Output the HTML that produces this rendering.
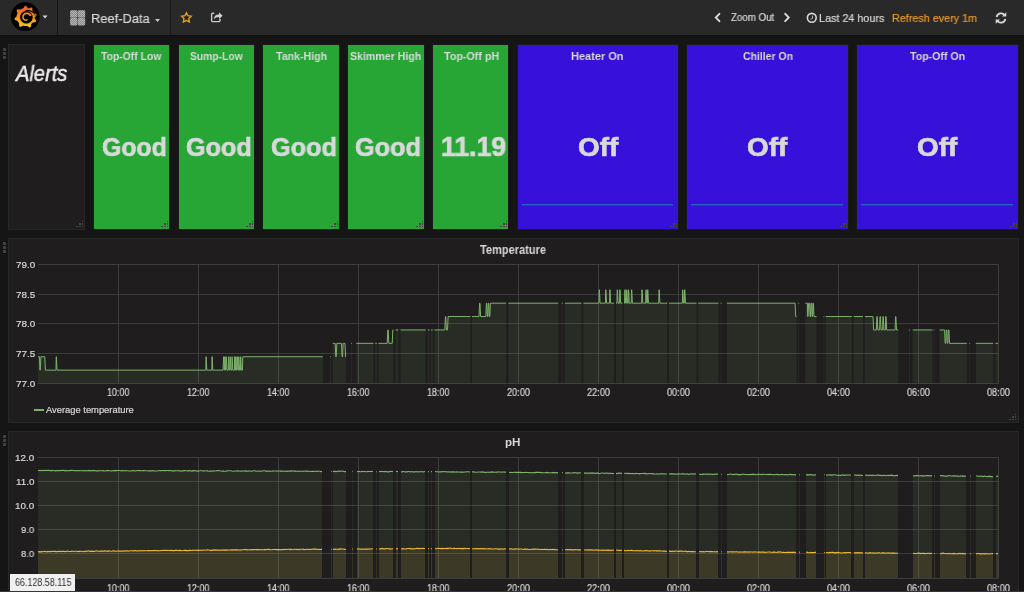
<!DOCTYPE html><html><head><meta charset="utf-8"><style>
html,body{margin:0;padding:0}
body{width:1024px;height:592px;overflow:hidden;background:#151515;position:relative;font-family:"Liberation Sans",sans-serif}
.t{position:absolute;white-space:nowrap;transform-origin:0 0;will-change:transform}
.b{position:absolute;box-sizing:border-box}
svg{position:absolute;left:0;top:0}
</style></head><body>
<div class="b" style="left:0px;top:0px;width:1024px;height:35px;background:#292929;"></div>
<div class="b" style="left:0px;top:35px;width:1024px;height:3px;background:linear-gradient(#0f0f0f,#151515);"></div>
<div class="b" style="left:57px;top:0px;width:1px;height:35px;background:#161616;"></div>
<div class="b" style="left:170px;top:0px;width:1px;height:35px;background:#161616;"></div>
<svg width="60" height="35" style="left:0;top:0"><defs><linearGradient id="lg" gradientUnits="userSpaceOnUse" x1="0" y1="5" x2="0" y2="28"><stop offset="0" stop-color="#f0502a"/><stop offset="1" stop-color="#fbd00a"/></linearGradient></defs><circle cx="25.2" cy="16.7" r="14.4" fill="#000"/><path fill="url(#lg)" d="M15.96,17.00 L16.06,16.92 L16.14,16.83 L16.23,16.75 L16.31,16.68 L16.38,16.60 L16.44,16.52 L16.50,16.44 L16.54,16.37 L16.58,16.29 L16.61,16.21 L16.64,16.14 L16.65,16.06 L16.66,15.98 L16.67,15.90 L16.68,15.83 L16.69,15.75 L16.70,15.67 L16.71,15.59 L16.72,15.51 L16.74,15.44 L16.75,15.36 L16.77,15.28 L16.78,15.21 L16.80,15.13 L16.81,15.05 L16.83,14.98 L16.85,14.90 L16.87,14.82 L16.89,14.75 L16.91,14.67 L16.93,14.59 L16.95,14.52 L16.97,14.44 L16.99,14.37 L17.02,14.29 L17.04,14.22 L17.07,14.14 L17.09,14.07 L17.12,14.00 L17.14,13.92 L17.17,13.85 L17.20,13.77 L17.23,13.70 L17.26,13.63 L17.29,13.56 L17.32,13.48 L17.34,13.41 L17.36,13.33 L17.37,13.25 L17.37,13.16 L17.37,13.07 L17.36,12.98 L17.34,12.88 L17.31,12.78 L17.28,12.67 L17.25,12.56 L17.21,12.45 L17.17,12.33 L17.13,12.21 L17.08,12.08 L17.04,11.96 L16.99,11.83 L16.95,11.70 L16.90,11.57 L16.86,11.43 L16.82,11.30 L16.79,11.17 L16.76,11.04 L16.74,10.91 L16.72,10.78 L16.71,10.66 L16.70,10.53 L16.70,10.42 L16.71,10.30 L16.73,10.19 L16.76,10.09 L16.79,9.99 L16.83,9.90 L16.88,9.82 L16.94,9.74 L17.01,9.66 L17.09,9.60 L17.17,9.54 L17.26,9.49 L17.36,9.45 L17.46,9.41 L17.57,9.38 L17.69,9.36 L17.81,9.34 L17.93,9.33 L18.06,9.33 L18.19,9.33 L18.33,9.34 L18.46,9.35 L18.60,9.36 L18.74,9.38 L18.87,9.40 L19.01,9.42 L19.15,9.44 L19.28,9.47 L19.41,9.49 L19.53,9.51 L19.66,9.53 L19.78,9.55 L19.89,9.56 L20.00,9.57 L20.11,9.58 L20.21,9.58 L20.30,9.57 L20.39,9.56 L20.48,9.55 L20.56,9.52 L20.63,9.49 L20.70,9.45 L20.76,9.41 L20.83,9.37 L20.90,9.33 L20.96,9.29 L21.03,9.25 L21.10,9.21 L21.17,9.17 L21.24,9.13 L21.31,9.09 L21.37,9.05 L21.44,9.02 L21.51,8.98 L21.58,8.95 L21.65,8.91 L21.73,8.88 L21.80,8.84 L21.87,8.81 L21.94,8.78 L22.01,8.75 L22.08,8.72 L22.16,8.69 L22.23,8.66 L22.30,8.63 L22.37,8.60 L22.45,8.57 L22.52,8.54 L22.60,8.52 L22.67,8.49 L22.74,8.47 L22.82,8.44 L22.89,8.42 L22.97,8.39 L23.04,8.37 L23.11,8.33 L23.18,8.29 L23.25,8.23 L23.32,8.17 L23.38,8.10 L23.44,8.02 L23.51,7.94 L23.57,7.85 L23.63,7.75 L23.70,7.65 L23.76,7.54 L23.83,7.43 L23.89,7.31 L23.96,7.20 L24.03,7.08 L24.10,6.96 L24.17,6.84 L24.25,6.73 L24.32,6.61 L24.40,6.50 L24.49,6.40 L24.57,6.29 L24.65,6.20 L24.74,6.11 L24.83,6.03 L24.92,5.95 L25.02,5.89 L25.11,5.83 L25.21,5.78 L25.31,5.75 L25.40,5.72 L25.50,5.71 L25.60,5.70 L25.70,5.71 L25.80,5.72 L25.89,5.75 L25.99,5.78 L26.09,5.83 L26.18,5.89 L26.28,5.95 L26.37,6.03 L26.46,6.11 L26.55,6.20 L26.63,6.29 L26.71,6.40 L26.80,6.50 L26.88,6.61 L26.95,6.73 L27.03,6.84 L27.10,6.96 L27.17,7.08 L27.24,7.20 L27.31,7.31 L27.37,7.43 L27.44,7.54 L27.50,7.65 L27.57,7.75 L27.63,7.85 L27.69,7.94 L27.76,8.02 L27.82,8.10 L27.88,8.17 L27.95,8.23 L28.02,8.29 L28.09,8.33 L28.16,8.37 L28.23,8.39 L28.31,8.41 L28.39,8.42 L28.47,8.42 L28.56,8.42 L28.64,8.40 L28.74,8.38 L28.83,8.35 L28.93,8.32 L29.04,8.28 L29.14,8.23 L29.25,8.18 L29.37,8.13 L29.48,8.07 L29.60,8.02 L29.72,7.96 L29.84,7.90 L29.97,7.84 L30.10,7.78 L30.22,7.73 L30.35,7.68 L30.48,7.63 L30.61,7.59 L30.73,7.55 L30.86,7.52 L30.98,7.49 L31.10,7.47 L31.22,7.46 L31.33,7.46 L31.44,7.47 L31.55,7.48 L31.65,7.51 L31.74,7.54 L31.83,7.58 L31.92,7.63 L32.00,7.69 L32.07,7.76 L32.14,7.84 L32.20,7.92 L32.25,8.01 L32.30,8.11 L32.34,8.22 L32.37,8.33 L32.40,8.45 L32.42,8.57 L32.44,8.70 L32.45,8.83 L32.46,8.97 L32.47,9.10 L32.47,9.24 L32.46,9.38 L32.46,9.52 L32.45,9.65 L32.44,9.79 L32.43,9.93 L32.42,10.06 L32.41,10.19 L32.41,10.31 L32.40,10.43 L32.40,10.55 L32.40,10.66 L32.41,10.76 L32.42,10.86 L32.43,10.96 L32.45,11.04 L32.48,11.13 L32.51,11.20 L32.55,11.27 L32.59,11.34 L32.64,11.40 L32.69,11.46 L32.74,11.52 L32.79,11.58 L32.83,11.65 L32.88,11.71 L32.93,11.77 L32.97,11.84 L33.02,11.90 L33.06,11.97 L33.10,12.03 L33.15,12.10 L33.19,12.16 L33.23,12.23 L33.27,12.30 L33.31,12.36 L33.35,12.43 L33.39,12.50 L33.43,12.57 L33.47,12.64 L33.51,12.70 L33.56,12.77 L33.62,12.82 L33.69,12.88 L33.76,12.93 L33.84,12.98 L33.93,13.03 L34.03,13.07 L34.13,13.11 L34.24,13.15 L34.35,13.19 L34.47,13.23 L34.59,13.27 L34.72,13.32 L34.85,13.36 L34.98,13.40 L35.11,13.45 L35.24,13.49 L35.37,13.54 L35.49,13.59 L35.62,13.65 L35.74,13.71 L35.86,13.77 L35.97,13.83 L36.07,13.90 L36.17,13.97 L36.27,14.04 L36.35,14.12 L36.42,14.20 L36.49,14.29 L36.55,14.37 L36.59,14.46 L36.63,14.56 L36.65,14.65 L36.67,14.75 L36.67,14.85 L36.67,14.95 L36.65,15.05 L36.63,15.15 L36.59,15.26 L36.55,15.36 L36.49,15.47 L36.43,15.57 L36.36,15.68 L36.29,15.78 L36.20,15.89 L36.12,15.99 L36.02,16.09 L35.93,16.19 L35.83,16.28 L35.73,16.38 L35.63,16.47 L35.53,16.57 L35.43,16.66 L35.33,16.75 L35.24,16.83 L35.14,16.92 L35.06,17.00 L34.97,17.08 L34.90,17.16 L34.83,17.24 L34.77,17.32 L34.71,17.40 L34.67,17.48 L34.63,17.55 L34.60,17.63 L34.58,17.71 L34.57,17.78 L34.56,17.86 L34.55,17.94 L34.55,18.02 L34.55,18.10 L34.57,18.18 L34.59,18.26 L34.62,18.35 L34.66,18.43 L34.71,18.52 L34.76,18.61 L34.82,18.71 L34.88,18.80 L34.95,18.90 L35.03,19.00 L35.10,19.11 L35.18,19.21 L35.26,19.32 L35.35,19.43 L35.43,19.54 L35.51,19.65 L35.58,19.77 L35.66,19.88 L35.73,20.00 L35.80,20.12 L35.86,20.23 L35.91,20.35 L35.96,20.47 L36.00,20.58 L36.03,20.69 L36.06,20.81 L36.07,20.92 L36.08,21.02 L36.07,21.13 L36.06,21.23 L36.04,21.32 L36.00,21.42 L35.96,21.50 L35.91,21.59 L35.84,21.67 L35.77,21.74 L35.69,21.81 L35.60,21.88 L35.50,21.94 L35.40,21.99 L35.29,22.04 L35.17,22.09 L35.05,22.13 L34.93,22.17 L34.80,22.20 L34.66,22.23 L34.53,22.26 L34.39,22.28 L34.25,22.30 L34.12,22.32 L33.98,22.34 L33.85,22.36 L33.72,22.37 L33.59,22.39 L33.47,22.41 L33.35,22.42 L33.23,22.44 L33.12,22.47 L33.02,22.49 L32.93,22.52 L32.84,22.55 L32.75,22.59 L32.68,22.63 L32.61,22.68 L32.55,22.73 L32.49,22.79 L32.44,22.85 L32.39,22.90 L32.34,22.96 L32.29,23.02 L32.24,23.08 L32.18,23.14 L32.13,23.20 L32.07,23.25 L32.02,23.31 L31.96,23.36 L31.91,23.42 L31.85,23.47 L31.80,23.53 L31.74,23.58 L31.68,23.64 L31.62,23.69 L31.56,23.74 L31.50,23.79 L31.45,23.85 L31.40,23.91 L31.35,23.98 L31.31,24.05 L31.28,24.14 L31.25,24.23 L31.22,24.32 L31.20,24.43 L31.18,24.54 L31.16,24.65 L31.14,24.77 L31.13,24.89 L31.11,25.02 L31.10,25.15 L31.09,25.29 L31.07,25.42 L31.05,25.56 L31.03,25.70 L31.01,25.83 L30.99,25.97 L30.96,26.10 L30.93,26.23 L30.90,26.36 L30.86,26.48 L30.81,26.60 L30.76,26.71 L30.71,26.82 L30.65,26.91 L30.59,27.00 L30.52,27.09 L30.45,27.16 L30.37,27.22 L30.28,27.28 L30.20,27.32 L30.10,27.36 L30.01,27.38 L29.91,27.40 L29.80,27.41 L29.70,27.40 L29.59,27.39 L29.48,27.37 L29.36,27.34 L29.25,27.30 L29.13,27.25 L29.01,27.20 L28.89,27.14 L28.78,27.08 L28.66,27.01 L28.54,26.93 L28.43,26.86 L28.31,26.78 L28.20,26.70 L28.09,26.62 L27.98,26.54 L27.87,26.47 L27.77,26.39 L27.67,26.32 L27.57,26.25 L27.47,26.19 L27.37,26.13 L27.28,26.08 L27.19,26.03 L27.11,26.00 L27.02,25.97 L26.94,25.94 L26.86,25.93 L26.78,25.93 L26.70,25.93 L26.62,25.94 L26.54,25.95 L26.46,25.96 L26.38,25.97 L26.31,25.97 L26.23,25.98 L26.15,25.98 L26.07,25.99 L25.99,25.99 L25.91,25.99 L25.84,26.00 L25.76,26.00 L25.68,26.00 L25.60,26.00 L25.52,26.00 L25.44,26.00 L25.36,26.00 L25.29,25.99 L25.21,25.99 L25.13,25.99 L25.05,25.98 L24.97,25.98 L24.89,25.97 L24.82,25.97 L24.74,25.96 L24.66,25.95 L24.58,25.94 L24.50,25.93 L24.43,25.92 L24.35,25.91 L24.27,25.90 L24.19,25.89 L24.11,25.88 L24.04,25.86 L23.96,25.85 L23.88,25.83 L23.81,25.82 L23.73,25.80 L23.65,25.79 L23.58,25.77 L23.50,25.75 L23.42,25.73 L23.35,25.72 L23.27,25.71 L23.18,25.71 L23.10,25.73 L23.01,25.74 L22.92,25.77 L22.82,25.80 L22.73,25.84 L22.63,25.89 L22.52,25.94 L22.41,26.00 L22.30,26.06 L22.19,26.12 L22.08,26.18 L21.96,26.25 L21.84,26.31 L21.72,26.38 L21.59,26.44 L21.47,26.50 L21.34,26.56 L21.22,26.61 L21.09,26.66 L20.97,26.71 L20.85,26.75 L20.73,26.78 L20.61,26.80 L20.49,26.82 L20.38,26.83 L20.27,26.82 L20.16,26.82 L20.06,26.80 L19.96,26.77 L19.87,26.73 L19.78,26.69 L19.70,26.63 L19.62,26.57 L19.55,26.49 L19.49,26.41 L19.43,26.32 L19.38,26.23 L19.33,26.12 L19.29,26.01 L19.26,25.89 L19.23,25.77 L19.20,25.65 L19.18,25.52 L19.17,25.38 L19.16,25.25 L19.15,25.11 L19.15,24.97 L19.14,24.83 L19.14,24.69 L19.15,24.56 L19.15,24.42 L19.15,24.29 L19.15,24.16 L19.15,24.04 L19.15,23.92 L19.15,23.80 L19.14,23.69 L19.13,23.58 L19.11,23.49 L19.09,23.39 L19.07,23.31 L19.04,23.23 L19.00,23.15 L18.96,23.08 L18.91,23.02 L18.86,22.96 L18.81,22.90 L18.76,22.85 L18.71,22.79 L18.66,22.72 L18.61,22.66 L18.56,22.60 L18.51,22.54 L18.46,22.48 L18.41,22.42 L18.37,22.35 L18.32,22.29 L18.27,22.23 L18.23,22.16 L18.18,22.10 L18.14,22.03 L18.10,21.97 L18.05,21.90 L18.01,21.84 L17.97,21.77 L17.93,21.70 L17.89,21.64 L17.85,21.57 L17.81,21.50 L17.77,21.43 L17.73,21.36 L17.69,21.29 L17.65,21.23 L17.61,21.16 L17.56,21.09 L17.51,21.04 L17.44,20.98 L17.37,20.93 L17.29,20.88 L17.20,20.83 L17.10,20.78 L17.00,20.74 L16.89,20.70 L16.78,20.65 L16.66,20.61 L16.54,20.57 L16.42,20.52 L16.29,20.48 L16.16,20.44 L16.03,20.39 L15.90,20.34 L15.77,20.29 L15.65,20.23 L15.52,20.18 L15.40,20.12 L15.29,20.05 L15.18,19.99 L15.07,19.92 L14.97,19.85 L14.88,19.77 L14.80,19.69 L14.73,19.61 L14.67,19.52 L14.61,19.44 L14.57,19.35 L14.53,19.25 L14.51,19.16 L14.49,19.06 L14.49,18.96 L14.50,18.86 L14.52,18.76 L14.54,18.65 L14.58,18.55 L14.63,18.44 L14.68,18.34 L14.75,18.24 L14.82,18.13 L14.89,18.03 L14.98,17.93 L15.07,17.83 L15.16,17.73 L15.26,17.63 L15.36,17.54 L15.46,17.44 L15.56,17.35 L15.66,17.26 L15.77,17.17 L15.87,17.08Z"/><circle cx="26.4" cy="17.3" r="6.3" fill="#000"/><path fill="#000" d="M25.20,10.50 L25.38,10.43 L25.56,10.37 L25.74,10.30 L25.92,10.25 L26.11,10.19 L26.30,10.15 L26.49,10.10 L26.69,10.07 L26.88,10.03 L27.08,10.01 L27.28,9.99 L27.48,9.97 L27.69,9.96 L27.89,9.95 L28.10,9.96 L28.30,9.96 L28.51,9.98 L28.72,9.99 L28.93,10.02 L29.14,10.05 L29.34,10.09 L29.55,10.13 L29.76,10.18 L29.97,10.23 L30.18,10.29 L30.39,10.36 L30.59,10.43 L30.80,10.51 L31.00,10.60 L31.21,10.69 L31.41,10.78 L31.61,10.89 L31.80,11.00 L32.00,11.11 L32.19,11.23 L32.38,11.36 L32.57,11.49 L32.75,11.63 L32.94,11.78 L33.11,11.93 L33.29,12.08 L33.46,12.24 L33.63,12.41 L33.79,12.58 L33.95,12.76 L34.11,12.94 L34.26,13.13 L34.41,13.32 L34.55,13.52 L34.69,13.73 L34.82,13.93 L34.95,14.14 L35.07,14.36 L35.18,14.58 L35.29,14.81 L35.40,15.03 L35.50,15.27 L35.59,15.50 L35.68,15.74 L35.76,15.98 L35.26,16.05 L35.16,15.83 L35.06,15.61 L34.95,15.39 L34.83,15.18 L34.71,14.97 L34.58,14.77 L34.45,14.57 L34.31,14.38 L34.17,14.19 L34.03,14.01 L33.88,13.83 L33.73,13.66 L33.57,13.50 L33.41,13.34 L33.25,13.19 L33.08,13.04 L32.91,12.90 L32.74,12.76 L32.56,12.63 L32.39,12.51 L32.21,12.39 L32.03,12.28 L31.84,12.18 L31.66,12.08 L31.47,11.99 L31.28,11.90 L31.10,11.82 L30.91,11.75 L30.72,11.68 L30.53,11.62 L30.34,11.56 L30.15,11.51 L29.96,11.47 L29.77,11.43 L29.58,11.40 L29.39,11.37 L29.21,11.35 L29.02,11.34 L28.84,11.33 L28.65,11.33 L28.47,11.33 L28.29,11.34 L28.11,11.35 L27.94,11.37 L27.76,11.39 L27.59,11.42 L27.42,11.45 L27.26,11.49 L27.09,11.54 L26.93,11.58 L26.78,11.63 L26.62,11.69 L26.47,11.75 L26.32,11.82 L26.18,11.88 L26.04,11.96 L25.90,12.03 L25.77,12.11 L25.64,12.19 L25.51,12.28Z"/><path fill="url(#lg)" d="M31.71,15.47 L31.50,15.06 L31.25,14.67 L30.98,14.31 L30.68,13.98 L30.36,13.67 L30.01,13.39 L29.65,13.14 L29.27,12.93 L28.87,12.75 L28.47,12.60 L28.06,12.49 L27.64,12.41 L27.23,12.37 L26.81,12.36 L26.40,12.39 L26.00,12.45 L25.60,12.54 L25.22,12.66 L24.85,12.81 L24.50,12.99 L24.17,13.20 L23.86,13.43 L23.57,13.68 L23.30,13.96 L23.06,14.25 L22.85,14.56 L22.67,14.88 L22.51,15.22 L22.39,15.56 L22.29,15.90 L22.22,16.25 L22.18,16.61 L22.18,16.96 L22.20,17.30 L22.24,17.64 L22.32,17.97 L22.42,18.29 L22.55,18.60 L22.70,18.90 L22.87,19.17 L23.06,19.43 L23.27,19.67 L23.50,19.89 L23.74,20.09 L24.00,20.26 L24.26,20.41 L24.54,20.54 L24.82,20.64 L25.10,20.72 L25.39,20.78 L25.68,20.81 L25.96,20.81 L26.24,20.79 L26.52,20.75 L26.78,20.69 L27.04,20.61 L27.29,20.50 L27.52,20.38 L27.74,20.24 L27.95,20.08 L27.35,19.05 L27.22,19.14 L27.09,19.23 L26.95,19.31 L26.79,19.37 L26.64,19.42 L26.47,19.46 L26.30,19.49 L26.13,19.50 L25.95,19.50 L25.78,19.48 L25.60,19.45 L25.42,19.40 L25.25,19.34 L25.08,19.26 L24.91,19.17 L24.76,19.06 L24.60,18.94 L24.46,18.81 L24.33,18.66 L24.21,18.50 L24.10,18.33 L24.01,18.15 L23.93,17.96 L23.86,17.76 L23.82,17.55 L23.79,17.34 L23.77,17.12 L23.78,16.91 L23.80,16.69 L23.84,16.47 L23.90,16.25 L23.98,16.04 L24.07,15.83 L24.19,15.63 L24.32,15.44 L24.47,15.25 L24.63,15.08 L24.81,14.92 L25.00,14.78 L25.21,14.65 L25.43,14.53 L25.66,14.44 L25.90,14.36 L26.15,14.30 L26.40,14.26 L26.66,14.25 L26.92,14.25 L27.18,14.28 L27.44,14.32 L27.70,14.39 L27.95,14.48 L28.20,14.60 L28.44,14.73 L28.67,14.88 L28.88,15.06 L29.09,15.25 L29.27,15.46 L29.45,15.69 L29.60,15.93 L29.74,16.19Z"/><path d="M42.5,15.5 L47.5,15.5 L45,18.5 Z" fill="#d8d9da"/></svg>
<svg width="20" height="20" style="left:68px;top:8px">
<defs><pattern id="chk" width="2" height="2" patternUnits="userSpaceOnUse"><rect width="2" height="2" fill="#8a8a8a"/><rect width="1" height="1" fill="#b5b5b5"/><rect x="1" y="1" width="1" height="1" fill="#b5b5b5"/></pattern></defs>
<rect x="2.1" y="2.3" width="7.4" height="7.4" rx="1.3" fill="url(#chk)"/>
<rect x="9.8" y="2.3" width="7.4" height="7.4" rx="1.3" fill="url(#chk)"/>
<rect x="2.1" y="10.0" width="7.4" height="7.4" rx="1.3" fill="url(#chk)"/>
<rect x="9.8" y="10.0" width="7.4" height="7.4" rx="1.3" fill="url(#chk)"/>
</svg>
<div class="t" style="left:90.57px;top:12.06px;font-size:13.52px;line-height:13.52px;font-weight:normal;font-style:normal;color:#d8d9da;transform:scaleX(0.9539);-webkit-text-stroke:0.2px #d8d9da">Reef-Data</div>
<svg width="10" height="10" style="left:152px;top:14px"><path d="M3,5 L8,5 L5.5,8 Z" fill="#c8c8c8"/></svg>
<svg width="1024" height="40" style="left:0;top:0"><path d="M186.40,12.70 L187.93,15.70 L191.25,16.22 L188.87,18.60 L189.40,21.93 L186.40,20.40 L183.40,21.93 L183.93,18.60 L181.55,16.22 L184.87,15.70Z" fill="none" stroke="#e8a317" stroke-width="1.35" stroke-linejoin="miter"/><path d="M214.2,13.3 L212.8,13.3 Q211.6,13.3 211.6,14.5 L211.6,20.4 Q211.6,21.6 212.8,21.6 L218.8,21.6 Q220.0,21.6 220.0,20.4 L220.0,18.8" fill="none" stroke="#c8c8c8" stroke-width="1.4"/><path d="M214.0,19.2 C214.0,15.8 216.2,14.6 219.0,14.6 L219.0,12.3 L222.6,15.7 L219.0,19.1 L219.0,16.9 C216.8,16.9 215.1,17.6 214.0,19.2 Z" fill="#d0d0d0"/></svg>
<svg width="10" height="14" style="left:712px;top:11px"><path d="M7.4,2.8 L3.8,6.5 L7.4,10.2" fill="none" stroke="#d8d9da" stroke-width="1.9" stroke-linecap="round"/></svg>
<div class="t" style="left:730.71px;top:12.89px;font-size:10.29px;line-height:10.29px;font-weight:normal;font-style:normal;color:#d8d9da;transform:scaleX(0.9436);-webkit-text-stroke:0.2px #d8d9da">Zoom Out</div>
<svg width="10" height="14" style="left:782px;top:11px"><path d="M3.2,2.8 L6.8,6.5 L3.2,10.2" fill="none" stroke="#d8d9da" stroke-width="1.9" stroke-linecap="round"/></svg>
<svg width="14" height="14" style="left:805px;top:10px"><circle cx="6.8" cy="7.8" r="4.4" fill="none" stroke="#d8d9da" stroke-width="1.6"/><path d="M5.6,9.2 L7.5,8.4 L7.6,5.6" fill="none" stroke="#bdbdbd" stroke-width="1.0"/></svg>
<div class="t" style="left:818.94px;top:12.66px;font-size:11.03px;line-height:11.03px;font-weight:normal;font-style:normal;color:#d8d9da;transform:scaleX(0.9787);-webkit-text-stroke:0.2px #d8d9da">Last 24 hours</div>
<div class="t" style="left:891.94px;top:12.66px;font-size:11.03px;line-height:11.03px;font-weight:normal;font-style:normal;color:#eb9a27;transform:scaleX(0.9782);-webkit-text-stroke:0.2px #eb9a27">Refresh every 1m</div>
<svg width="14" height="14" style="left:994px;top:11px">
<path d="M2.6,6 A4.6,4.6 0 0 1 10.8,4.2" fill="none" stroke="#d8d9da" stroke-width="1.8"/>
<path d="M12.3,1.2 L12.3,5.6 L8,5.6 Z" fill="#d8d9da"/>
<path d="M11.4,8 A4.6,4.6 0 0 1 3.2,9.8" fill="none" stroke="#d8d9da" stroke-width="1.8"/>
<path d="M1.7,12.8 L1.7,8.4 L6,8.4 Z" fill="#d8d9da"/>
</svg>
<div class="b" style="left:2.6px;top:48.2px;width:3px;height:3px;background:#434343;border-radius:0.8px"></div>
<div class="b" style="left:2.6px;top:52.1px;width:3px;height:3px;background:#434343;border-radius:0.8px"></div>
<div class="b" style="left:2.6px;top:56.0px;width:3px;height:3px;background:#434343;border-radius:0.8px"></div>
<div class="b" style="left:2.6px;top:242.1px;width:3px;height:3px;background:#434343;border-radius:0.8px"></div>
<div class="b" style="left:2.6px;top:246.0px;width:3px;height:3px;background:#434343;border-radius:0.8px"></div>
<div class="b" style="left:2.6px;top:249.9px;width:3px;height:3px;background:#434343;border-radius:0.8px"></div>
<div class="b" style="left:2.6px;top:435.1px;width:3px;height:3px;background:#434343;border-radius:0.8px"></div>
<div class="b" style="left:2.6px;top:439.0px;width:3px;height:3px;background:#434343;border-radius:0.8px"></div>
<div class="b" style="left:2.6px;top:442.9px;width:3px;height:3px;background:#434343;border-radius:0.8px"></div>
<div class="b" style="left:8px;top:44px;width:77px;height:186px;background:#1f1d1e;border:1px solid #272727"></div>
<div class="t" style="left:16.01px;top:62.52px;font-size:22.07px;line-height:22.07px;font-weight:normal;font-style:italic;color:#ececec;transform:scaleX(0.9115);-webkit-text-stroke:0.5px #ececec">Alerts</div>
<div class="b" style="left:81.7px;top:225.7px;width:1.8px;height:1.8px;background:#444"></div>
<div class="b" style="left:79.0px;top:225.7px;width:1.8px;height:1.8px;background:#444"></div>
<div class="b" style="left:76.3px;top:225.7px;width:1.8px;height:1.8px;background:#444"></div>
<div class="b" style="left:81.7px;top:223.1px;width:1.8px;height:1.8px;background:#444"></div>
<div class="b" style="left:79.0px;top:223.1px;width:1.8px;height:1.8px;background:#444"></div>
<div class="b" style="left:81.7px;top:220.5px;width:1.8px;height:1.8px;background:#444"></div>
<div class="b" style="left:93px;top:44px;width:77px;height:186px;background:#27a635;border:1px solid #1b1a1b"></div>
<div class="t" style="left:101.15px;top:50.96px;font-size:11.03px;line-height:11.03px;font-weight:bold;font-style:normal;color:#d8d9da;transform:scaleX(0.9422);">Top-Off Low</div>
<div class="t" style="left:101.61px;top:133.80px;font-size:26.34px;line-height:26.34px;font-weight:bold;font-style:normal;color:#d8d9da;transform:scaleX(0.9410);-webkit-text-stroke:0.7px #d8d9da">Good</div>
<div class="b" style="left:166.7px;top:225.7px;width:1.8px;height:1.8px;background:#474347"></div>
<div class="b" style="left:164.0px;top:225.7px;width:1.8px;height:1.8px;background:#474347"></div>
<div class="b" style="left:161.3px;top:225.7px;width:1.8px;height:1.8px;background:#474347"></div>
<div class="b" style="left:166.7px;top:223.1px;width:1.8px;height:1.8px;background:#474347"></div>
<div class="b" style="left:164.0px;top:223.1px;width:1.8px;height:1.8px;background:#474347"></div>
<div class="b" style="left:166.7px;top:220.5px;width:1.8px;height:1.8px;background:#474347"></div>
<div class="b" style="left:178px;top:44px;width:77px;height:186px;background:#27a635;border:1px solid #1b1a1b"></div>
<div class="t" style="left:189.69px;top:50.63px;font-size:11.43px;line-height:11.43px;font-weight:bold;font-style:normal;color:#d8d9da;transform:scaleX(0.9034);">Sump-Low</div>
<div class="t" style="left:185.99px;top:133.80px;font-size:26.34px;line-height:26.34px;font-weight:bold;font-style:normal;color:#d8d9da;transform:scaleX(0.9546);-webkit-text-stroke:0.7px #d8d9da">Good</div>
<div class="b" style="left:251.7px;top:225.7px;width:1.8px;height:1.8px;background:#474347"></div>
<div class="b" style="left:249.0px;top:225.7px;width:1.8px;height:1.8px;background:#474347"></div>
<div class="b" style="left:246.3px;top:225.7px;width:1.8px;height:1.8px;background:#474347"></div>
<div class="b" style="left:251.7px;top:223.1px;width:1.8px;height:1.8px;background:#474347"></div>
<div class="b" style="left:249.0px;top:223.1px;width:1.8px;height:1.8px;background:#474347"></div>
<div class="b" style="left:251.7px;top:220.5px;width:1.8px;height:1.8px;background:#474347"></div>
<div class="b" style="left:262px;top:44px;width:78px;height:186px;background:#27a635;border:1px solid #1b1a1b"></div>
<div class="t" style="left:275.89px;top:50.96px;font-size:11.03px;line-height:11.03px;font-weight:bold;font-style:normal;color:#d8d9da;transform:scaleX(0.9645);">Tank-High</div>
<div class="t" style="left:270.74px;top:133.80px;font-size:26.34px;line-height:26.34px;font-weight:bold;font-style:normal;color:#d8d9da;transform:scaleX(0.9584);-webkit-text-stroke:0.7px #d8d9da">Good</div>
<div class="b" style="left:336.7px;top:225.7px;width:1.8px;height:1.8px;background:#474347"></div>
<div class="b" style="left:334.0px;top:225.7px;width:1.8px;height:1.8px;background:#474347"></div>
<div class="b" style="left:331.3px;top:225.7px;width:1.8px;height:1.8px;background:#474347"></div>
<div class="b" style="left:336.7px;top:223.1px;width:1.8px;height:1.8px;background:#474347"></div>
<div class="b" style="left:334.0px;top:223.1px;width:1.8px;height:1.8px;background:#474347"></div>
<div class="b" style="left:336.7px;top:220.5px;width:1.8px;height:1.8px;background:#474347"></div>
<div class="b" style="left:347px;top:44px;width:78px;height:186px;background:#27a635;border:1px solid #1b1a1b"></div>
<div class="t" style="left:350.18px;top:50.96px;font-size:11.03px;line-height:11.03px;font-weight:bold;font-style:normal;color:#d8d9da;transform:scaleX(0.9629);">Skimmer High</div>
<div class="t" style="left:355.49px;top:133.80px;font-size:26.34px;line-height:26.34px;font-weight:bold;font-style:normal;color:#d8d9da;transform:scaleX(0.9584);-webkit-text-stroke:0.7px #d8d9da">Good</div>
<div class="b" style="left:421.7px;top:225.7px;width:1.8px;height:1.8px;background:#474347"></div>
<div class="b" style="left:419.0px;top:225.7px;width:1.8px;height:1.8px;background:#474347"></div>
<div class="b" style="left:416.3px;top:225.7px;width:1.8px;height:1.8px;background:#474347"></div>
<div class="b" style="left:421.7px;top:223.1px;width:1.8px;height:1.8px;background:#474347"></div>
<div class="b" style="left:419.0px;top:223.1px;width:1.8px;height:1.8px;background:#474347"></div>
<div class="b" style="left:421.7px;top:220.5px;width:1.8px;height:1.8px;background:#474347"></div>
<div class="b" style="left:432px;top:44px;width:77px;height:186px;background:#27a635;border:1px solid #1b1a1b"></div>
<div class="t" style="left:443.64px;top:50.96px;font-size:11.03px;line-height:11.03px;font-weight:bold;font-style:normal;color:#d8d9da;transform:scaleX(0.9742);">Top-Off pH</div>
<div class="t" style="left:440.52px;top:133.00px;font-size:27.29px;line-height:27.29px;font-weight:bold;font-style:normal;color:#d8d9da;transform:scaleX(0.9768);-webkit-text-stroke:0.7px #d8d9da">11.19</div>
<div class="b" style="left:505.7px;top:225.7px;width:1.8px;height:1.8px;background:#474347"></div>
<div class="b" style="left:503.0px;top:225.7px;width:1.8px;height:1.8px;background:#474347"></div>
<div class="b" style="left:500.3px;top:225.7px;width:1.8px;height:1.8px;background:#474347"></div>
<div class="b" style="left:505.7px;top:223.1px;width:1.8px;height:1.8px;background:#474347"></div>
<div class="b" style="left:503.0px;top:223.1px;width:1.8px;height:1.8px;background:#474347"></div>
<div class="b" style="left:505.7px;top:220.5px;width:1.8px;height:1.8px;background:#474347"></div>
<div class="b" style="left:517px;top:44px;width:162px;height:186px;background:#3710d9;border:1px solid #1b1a1b"></div>
<div class="t" style="left:571.28px;top:50.63px;font-size:11.43px;line-height:11.43px;font-weight:bold;font-style:normal;color:#d8d9da;transform:scaleX(0.9633);">Heater On</div>
<div class="t" style="left:578.28px;top:133.80px;font-size:26.34px;line-height:26.34px;font-weight:bold;font-style:normal;color:#d8d9da;transform:scaleX(1.0590);-webkit-text-stroke:0.7px #d8d9da">Off</div>
<div class="b" style="left:522px;top:204px;width:151px;height:1px;background:#2066c0;"></div>
<div class="b" style="left:522px;top:205px;width:151px;height:1px;background:#2a38c8;"></div>
<div class="b" style="left:675.7px;top:225.7px;width:1.8px;height:1.8px;background:#474347"></div>
<div class="b" style="left:673.0px;top:225.7px;width:1.8px;height:1.8px;background:#474347"></div>
<div class="b" style="left:670.3px;top:225.7px;width:1.8px;height:1.8px;background:#474347"></div>
<div class="b" style="left:675.7px;top:223.1px;width:1.8px;height:1.8px;background:#474347"></div>
<div class="b" style="left:673.0px;top:223.1px;width:1.8px;height:1.8px;background:#474347"></div>
<div class="b" style="left:675.7px;top:220.5px;width:1.8px;height:1.8px;background:#474347"></div>
<div class="b" style="left:686px;top:44px;width:163px;height:186px;background:#3710d9;border:1px solid #1b1a1b"></div>
<div class="t" style="left:742.68px;top:50.96px;font-size:11.03px;line-height:11.03px;font-weight:bold;font-style:normal;color:#d8d9da;transform:scaleX(0.9499);">Chiller On</div>
<div class="t" style="left:747.28px;top:133.80px;font-size:26.34px;line-height:26.34px;font-weight:bold;font-style:normal;color:#d8d9da;transform:scaleX(1.0590);-webkit-text-stroke:0.7px #d8d9da">Off</div>
<div class="b" style="left:691px;top:204px;width:152px;height:1px;background:#2066c0;"></div>
<div class="b" style="left:691px;top:205px;width:152px;height:1px;background:#2a38c8;"></div>
<div class="b" style="left:845.7px;top:225.7px;width:1.8px;height:1.8px;background:#474347"></div>
<div class="b" style="left:843.0px;top:225.7px;width:1.8px;height:1.8px;background:#474347"></div>
<div class="b" style="left:840.3px;top:225.7px;width:1.8px;height:1.8px;background:#474347"></div>
<div class="b" style="left:845.7px;top:223.1px;width:1.8px;height:1.8px;background:#474347"></div>
<div class="b" style="left:843.0px;top:223.1px;width:1.8px;height:1.8px;background:#474347"></div>
<div class="b" style="left:845.7px;top:220.5px;width:1.8px;height:1.8px;background:#474347"></div>
<div class="b" style="left:856px;top:44px;width:163px;height:186px;background:#3710d9;border:1px solid #1b1a1b"></div>
<div class="t" style="left:909.89px;top:50.96px;font-size:11.03px;line-height:11.03px;font-weight:bold;font-style:normal;color:#d8d9da;transform:scaleX(0.9628);">Top-Off On</div>
<div class="t" style="left:917.39px;top:133.80px;font-size:26.34px;line-height:26.34px;font-weight:bold;font-style:normal;color:#d8d9da;transform:scaleX(1.0563);-webkit-text-stroke:0.7px #d8d9da">Off</div>
<div class="b" style="left:861px;top:204px;width:152px;height:1px;background:#2066c0;"></div>
<div class="b" style="left:861px;top:205px;width:152px;height:1px;background:#2a38c8;"></div>
<div class="b" style="left:1015.7px;top:225.7px;width:1.8px;height:1.8px;background:#474347"></div>
<div class="b" style="left:1013.0px;top:225.7px;width:1.8px;height:1.8px;background:#474347"></div>
<div class="b" style="left:1010.3px;top:225.7px;width:1.8px;height:1.8px;background:#474347"></div>
<div class="b" style="left:1015.7px;top:223.1px;width:1.8px;height:1.8px;background:#474347"></div>
<div class="b" style="left:1013.0px;top:223.1px;width:1.8px;height:1.8px;background:#474347"></div>
<div class="b" style="left:1015.7px;top:220.5px;width:1.8px;height:1.8px;background:#474347"></div>
<div class="b" style="left:8px;top:238px;width:1011px;height:185px;background:#1f1d1e;border:1px solid #272727"></div>
<div class="t" style="left:480.09px;top:243.89px;font-size:12.17px;line-height:12.17px;font-weight:bold;font-style:normal;color:#d8d9da;transform:scaleX(0.9079);">Temperature</div>
<svg width="1024" height="592" style="left:0;top:0"><rect x="38" y="264" width="961" height="1" fill="#3d3d3d"/><rect x="38" y="294" width="961" height="1" fill="#3d3d3d"/><rect x="38" y="323" width="961" height="1" fill="#3d3d3d"/><rect x="38" y="353" width="961" height="1" fill="#3d3d3d"/><rect x="38" y="383" width="961" height="1" fill="#3d3d3d"/><rect x="118" y="264" width="1" height="120" fill="#3d3d3d"/><rect x="198" y="264" width="1" height="120" fill="#3d3d3d"/><rect x="278" y="264" width="1" height="120" fill="#3d3d3d"/><rect x="358" y="264" width="1" height="120" fill="#3d3d3d"/><rect x="438" y="264" width="1" height="120" fill="#3d3d3d"/><rect x="518" y="264" width="1" height="120" fill="#3d3d3d"/><rect x="598" y="264" width="1" height="120" fill="#3d3d3d"/><rect x="678" y="264" width="1" height="120" fill="#3d3d3d"/><rect x="758" y="264" width="1" height="120" fill="#3d3d3d"/><rect x="838" y="264" width="1" height="120" fill="#3d3d3d"/><rect x="918" y="264" width="1" height="120" fill="#3d3d3d"/><rect x="998" y="264" width="1" height="120" fill="#3d3d3d"/><path d="M38.00,383.5 L38.00,356.73 L39.50,356.73 L39.90,370.11 L40.30,370.11 L40.90,356.73 L44.80,356.73 L45.40,370.11 L56.00,370.11 L56.20,356.73 L56.40,356.73 L57.00,370.11 L205.80,370.11 L206.00,356.73 L206.20,356.73 L206.80,370.11 L211.80,370.11 L212.00,356.73 L212.20,356.73 L212.80,370.11 L223.00,370.11 L222.90,370.11 L223.00,370.11 L223.60,356.73 L223.90,356.73 L224.25,370.11 L224.60,370.11 L224.80,356.73 L225.00,356.73 L225.60,370.11 L225.90,370.11 L226.15,356.73 L226.40,356.73 L227.00,370.11 L228.30,370.11 L228.50,356.73 L228.70,356.73 L229.30,370.11 L229.90,370.11 L230.10,356.73 L230.30,356.73 L230.90,370.11 L231.80,370.11 L232.00,356.73 L232.20,356.73 L232.80,370.11 L234.30,370.11 L234.50,356.73 L234.70,356.73 L235.10,370.11 L235.50,370.11 L235.70,356.73 L235.90,356.73 L236.50,370.11 L237.00,370.11 L237.20,356.73 L237.40,356.73 L238.00,370.11 L238.50,370.11 L238.70,356.73 L238.90,356.73 L239.50,370.11 L240.40,370.11 L240.60,356.73 L240.80,356.73 L241.40,370.11 L242.40,370.11 L242.75,356.73 L243.10,356.73 L243.10,356.73 L322.80,356.73 L322.80,383.5 Z M330.20,383.5 L330.20,356.73 L331.00,356.73 L331.00,383.5 Z M332.70,383.5 L332.70,343.34 L335.20,343.34 L335.80,356.73 L336.20,356.73 L336.80,343.34 L341.50,343.34 L342.10,356.73 L342.50,356.73 L343.10,343.34 L345.00,343.34 L345.60,356.73 L346.20,356.73 L346.20,383.5 Z M351.20,383.5 L351.20,343.34 L352.00,343.34 L352.00,383.5 Z M356.30,383.5 L356.30,343.34 L373.50,343.34 L373.50,383.5 Z M375.20,383.5 L375.20,343.34 L376.90,343.34 L376.90,383.5 Z M378.40,383.5 L378.40,343.34 L387.20,343.34 L387.80,329.95 L388.20,329.95 L388.80,343.34 L392.20,343.34 L392.80,329.95 L393.40,329.95 L393.40,383.5 Z M395.60,383.5 L395.60,329.95 L398.40,329.95 L398.40,383.5 Z M400.50,383.5 L400.50,329.95 L425.70,329.95 L425.70,383.5 Z M427.80,383.5 L427.80,329.95 L429.50,329.95 L429.50,383.5 Z M431.00,383.5 L431.00,329.95 L432.80,329.95 L432.80,383.5 Z M434.30,383.5 L434.30,329.95 L444.80,329.95 L445.40,316.56 L445.80,316.56 L446.40,329.95 L447.50,329.95 L448.10,316.56 L470.40,316.56 L470.40,383.5 Z M471.90,383.5 L471.90,316.56 L479.00,316.56 L479.60,303.18 L480.00,303.18 L480.60,316.56 L485.80,316.56 L486.40,303.18 L486.80,303.18 L487.40,316.56 L487.80,316.56 L488.40,303.18 L488.80,303.18 L489.40,316.56 L489.80,316.56 L490.40,303.18 L490.80,303.18 L490.80,303.18 L506.20,303.18 L506.20,383.5 Z M508.40,383.5 L508.40,303.18 L558.30,303.18 L558.30,383.5 Z M561.60,383.5 L561.60,303.18 L562.60,303.18 L562.60,383.5 Z M564.80,383.5 L564.80,303.18 L581.50,303.18 L581.50,383.5 Z M583.40,383.5 L583.40,303.18 L598.80,303.18 L598.80,303.18 L598.95,303.18 L599.20,289.79 L599.45,289.79 L600.05,303.18 L605.45,303.18 L605.70,289.79 L605.95,289.79 L606.55,303.18 L609.55,303.18 L609.80,289.79 L610.05,289.79 L610.65,303.18 L614.00,303.18 L614.00,383.5 Z M616.00,383.5 L616.00,303.18 L616.95,303.18 L617.20,289.79 L617.45,289.79 L618.05,303.18 L619.55,303.18 L619.80,289.79 L620.05,289.79 L620.65,303.18 L622.40,303.18 L622.40,383.5 Z M624.00,383.5 L624.00,303.18 L624.55,303.18 L624.80,289.79 L625.05,289.79 L625.65,303.18 L626.35,303.18 L626.60,289.79 L626.85,289.79 L627.45,303.18 L628.15,303.18 L628.40,289.79 L628.65,289.79 L629.25,303.18 L631.25,303.18 L631.50,289.79 L631.75,289.79 L632.35,303.18 L641.65,303.18 L641.90,289.79 L642.15,289.79 L642.75,303.18 L645.65,303.18 L645.90,289.79 L646.15,289.79 L646.75,303.18 L647.35,303.18 L647.60,289.79 L647.85,289.79 L648.45,303.18 L658.75,303.18 L659.00,289.79 L659.25,289.79 L659.85,303.18 L667.40,303.18 L667.40,383.5 Z M669.00,383.5 L669.00,303.18 L682.35,303.18 L682.60,289.79 L682.85,289.79 L683.45,303.18 L684.35,303.18 L684.60,289.79 L684.85,289.79 L685.45,303.18 L696.60,303.18 L696.60,383.5 Z M698.20,383.5 L698.20,303.18 L718.50,303.18 L718.50,383.5 Z M720.60,383.5 L720.60,303.18 L721.60,303.18 L721.60,383.5 Z M726.90,383.5 L726.90,303.18 L795.10,303.18 L795.70,316.56 L796.60,316.56 L796.60,383.5 Z M798.40,383.5 L798.40,303.18 L799.20,303.18 L799.20,383.5 Z M805.30,383.5 L805.30,303.18 L807.40,303.18 L807.70,316.56 L808.00,316.56 L808.60,303.18 L809.60,303.18 L810.00,316.56 L810.40,316.56 L811.00,303.18 L811.60,303.18 L812.00,316.56 L812.40,316.56 L813.00,303.18 L813.40,303.18 L814.00,316.56 L816.50,316.56 L816.50,383.5 Z M823.60,383.5 L823.60,316.56 L824.40,316.56 L824.40,383.5 Z M825.80,383.5 L825.80,316.56 L851.80,316.56 L851.80,383.5 Z M853.60,383.5 L853.60,316.56 L863.00,316.56 L863.00,383.5 Z M864.80,383.5 L864.80,316.56 L872.20,316.56 L872.20,316.56 L873.00,316.56 L873.60,329.95 L876.40,329.95 L876.80,316.56 L877.20,316.56 L877.80,329.95 L879.60,329.95 L880.00,316.56 L880.40,316.56 L881.00,329.95 L882.60,329.95 L882.95,316.56 L883.30,316.56 L883.90,329.95 L885.40,329.95 L885.75,316.56 L886.10,316.56 L886.70,329.95 L889.00,329.95 L889.00,329.95 L895.10,329.95 L895.50,316.56 L895.90,316.56 L896.50,329.95 L898.30,329.95 L898.30,383.5 Z M909.10,383.5 L909.10,329.95 L909.90,329.95 L909.90,383.5 Z M912.70,383.5 L912.70,329.95 L932.40,329.95 L932.40,383.5 Z M933.60,383.5 L933.60,329.95 L934.40,329.95 L934.40,383.5 Z M939.50,383.5 L939.50,329.95 L944.60,329.95 L945.20,343.34 L945.68,343.34 L946.28,329.95 L946.76,329.95 L947.36,343.34 L947.84,343.34 L948.44,329.95 L948.92,329.95 L949.52,343.34 L950.00,343.34 L950.00,343.34 L966.80,343.34 L966.80,383.5 Z M969.30,383.5 L969.30,343.34 L970.10,343.34 L970.10,383.5 Z M975.80,383.5 L975.80,343.34 L993.20,343.34 L993.20,383.5 Z M995.50,383.5 L995.50,343.34 L998.00,343.34 L998.00,383.5 Z" fill="rgba(126,178,109,0.10)"/><path d="M38.00,356.73 L39.50,356.73 L39.90,370.11 L40.30,370.11 L40.90,356.73 L44.80,356.73 L45.40,370.11 L56.00,370.11 L56.20,356.73 L56.40,356.73 L57.00,370.11 L205.80,370.11 L206.00,356.73 L206.20,356.73 L206.80,370.11 L211.80,370.11 L212.00,356.73 L212.20,356.73 L212.80,370.11 L223.00,370.11 L222.90,370.11 L223.00,370.11 L223.60,356.73 L223.90,356.73 L224.25,370.11 L224.60,370.11 L224.80,356.73 L225.00,356.73 L225.60,370.11 L225.90,370.11 L226.15,356.73 L226.40,356.73 L227.00,370.11 L228.30,370.11 L228.50,356.73 L228.70,356.73 L229.30,370.11 L229.90,370.11 L230.10,356.73 L230.30,356.73 L230.90,370.11 L231.80,370.11 L232.00,356.73 L232.20,356.73 L232.80,370.11 L234.30,370.11 L234.50,356.73 L234.70,356.73 L235.10,370.11 L235.50,370.11 L235.70,356.73 L235.90,356.73 L236.50,370.11 L237.00,370.11 L237.20,356.73 L237.40,356.73 L238.00,370.11 L238.50,370.11 L238.70,356.73 L238.90,356.73 L239.50,370.11 L240.40,370.11 L240.60,356.73 L240.80,356.73 L241.40,370.11 L242.40,370.11 L242.75,356.73 L243.10,356.73 L243.10,356.73 L322.80,356.73 M330.20,356.73 L331.00,356.73 M332.70,343.34 L335.20,343.34 L335.80,356.73 L336.20,356.73 L336.80,343.34 L341.50,343.34 L342.10,356.73 L342.50,356.73 L343.10,343.34 L345.00,343.34 L345.60,356.73 L346.20,356.73 M351.20,343.34 L352.00,343.34 M356.30,343.34 L373.50,343.34 M375.20,343.34 L376.90,343.34 M378.40,343.34 L387.20,343.34 L387.80,329.95 L388.20,329.95 L388.80,343.34 L392.20,343.34 L392.80,329.95 L393.40,329.95 M395.60,329.95 L398.40,329.95 M400.50,329.95 L425.70,329.95 M427.80,329.95 L429.50,329.95 M431.00,329.95 L432.80,329.95 M434.30,329.95 L444.80,329.95 L445.40,316.56 L445.80,316.56 L446.40,329.95 L447.50,329.95 L448.10,316.56 L470.40,316.56 M471.90,316.56 L479.00,316.56 L479.60,303.18 L480.00,303.18 L480.60,316.56 L485.80,316.56 L486.40,303.18 L486.80,303.18 L487.40,316.56 L487.80,316.56 L488.40,303.18 L488.80,303.18 L489.40,316.56 L489.80,316.56 L490.40,303.18 L490.80,303.18 L490.80,303.18 L506.20,303.18 M508.40,303.18 L558.30,303.18 M561.60,303.18 L562.60,303.18 M564.80,303.18 L581.50,303.18 M583.40,303.18 L598.80,303.18 L598.80,303.18 L598.95,303.18 L599.20,289.79 L599.45,289.79 L600.05,303.18 L605.45,303.18 L605.70,289.79 L605.95,289.79 L606.55,303.18 L609.55,303.18 L609.80,289.79 L610.05,289.79 L610.65,303.18 L614.00,303.18 M616.00,303.18 L616.95,303.18 L617.20,289.79 L617.45,289.79 L618.05,303.18 L619.55,303.18 L619.80,289.79 L620.05,289.79 L620.65,303.18 L622.40,303.18 M624.00,303.18 L624.55,303.18 L624.80,289.79 L625.05,289.79 L625.65,303.18 L626.35,303.18 L626.60,289.79 L626.85,289.79 L627.45,303.18 L628.15,303.18 L628.40,289.79 L628.65,289.79 L629.25,303.18 L631.25,303.18 L631.50,289.79 L631.75,289.79 L632.35,303.18 L641.65,303.18 L641.90,289.79 L642.15,289.79 L642.75,303.18 L645.65,303.18 L645.90,289.79 L646.15,289.79 L646.75,303.18 L647.35,303.18 L647.60,289.79 L647.85,289.79 L648.45,303.18 L658.75,303.18 L659.00,289.79 L659.25,289.79 L659.85,303.18 L667.40,303.18 M669.00,303.18 L682.35,303.18 L682.60,289.79 L682.85,289.79 L683.45,303.18 L684.35,303.18 L684.60,289.79 L684.85,289.79 L685.45,303.18 L696.60,303.18 M698.20,303.18 L718.50,303.18 M720.60,303.18 L721.60,303.18 M726.90,303.18 L795.10,303.18 L795.70,316.56 L796.60,316.56 M798.40,303.18 L799.20,303.18 M805.30,303.18 L807.40,303.18 L807.70,316.56 L808.00,316.56 L808.60,303.18 L809.60,303.18 L810.00,316.56 L810.40,316.56 L811.00,303.18 L811.60,303.18 L812.00,316.56 L812.40,316.56 L813.00,303.18 L813.40,303.18 L814.00,316.56 L816.50,316.56 M823.60,316.56 L824.40,316.56 M825.80,316.56 L851.80,316.56 M853.60,316.56 L863.00,316.56 M864.80,316.56 L872.20,316.56 L872.20,316.56 L873.00,316.56 L873.60,329.95 L876.40,329.95 L876.80,316.56 L877.20,316.56 L877.80,329.95 L879.60,329.95 L880.00,316.56 L880.40,316.56 L881.00,329.95 L882.60,329.95 L882.95,316.56 L883.30,316.56 L883.90,329.95 L885.40,329.95 L885.75,316.56 L886.10,316.56 L886.70,329.95 L889.00,329.95 L889.00,329.95 L895.10,329.95 L895.50,316.56 L895.90,316.56 L896.50,329.95 L898.30,329.95 M909.10,329.95 L909.90,329.95 M912.70,329.95 L932.40,329.95 M933.60,329.95 L934.40,329.95 M939.50,329.95 L944.60,329.95 L945.20,343.34 L945.68,343.34 L946.28,329.95 L946.76,329.95 L947.36,343.34 L947.84,343.34 L948.44,329.95 L948.92,329.95 L949.52,343.34 L950.00,343.34 L950.00,343.34 L966.80,343.34 M969.30,343.34 L970.10,343.34 M975.80,343.34 L993.20,343.34 M995.50,343.34 L998.00,343.34" fill="none" stroke="#7eb26d" stroke-width="1" stroke-linejoin="miter"/></svg>
<div class="t" style="left:15.57px;top:259.65px;font-size:9.86px;line-height:9.86px;font-weight:normal;font-style:normal;color:#d8d9da;transform:scaleX(1.0000);-webkit-text-stroke:0.2px #d8d9da">79.0</div>
<div class="t" style="left:15.57px;top:289.65px;font-size:9.86px;line-height:9.86px;font-weight:normal;font-style:normal;color:#d8d9da;transform:scaleX(1.0000);-webkit-text-stroke:0.2px #d8d9da">78.5</div>
<div class="t" style="left:15.57px;top:318.65px;font-size:9.86px;line-height:9.86px;font-weight:normal;font-style:normal;color:#d8d9da;transform:scaleX(1.0000);-webkit-text-stroke:0.2px #d8d9da">78.0</div>
<div class="t" style="left:15.57px;top:348.65px;font-size:9.86px;line-height:9.86px;font-weight:normal;font-style:normal;color:#d8d9da;transform:scaleX(1.0000);-webkit-text-stroke:0.2px #d8d9da">77.5</div>
<div class="t" style="left:15.57px;top:378.65px;font-size:9.86px;line-height:9.86px;font-weight:normal;font-style:normal;color:#d8d9da;transform:scaleX(1.0000);-webkit-text-stroke:0.2px #d8d9da">77.0</div>
<div class="t" style="left:107.13px;top:387.74px;font-size:10.00px;line-height:10.00px;font-weight:normal;font-style:normal;color:#d8d9da;transform:scaleX(0.8931);-webkit-text-stroke:0.2px #d8d9da">10:00</div>
<div class="t" style="left:187.13px;top:387.74px;font-size:10.00px;line-height:10.00px;font-weight:normal;font-style:normal;color:#d8d9da;transform:scaleX(0.8931);-webkit-text-stroke:0.2px #d8d9da">12:00</div>
<div class="t" style="left:267.13px;top:387.74px;font-size:10.00px;line-height:10.00px;font-weight:normal;font-style:normal;color:#d8d9da;transform:scaleX(0.8931);-webkit-text-stroke:0.2px #d8d9da">14:00</div>
<div class="t" style="left:347.13px;top:387.74px;font-size:10.00px;line-height:10.00px;font-weight:normal;font-style:normal;color:#d8d9da;transform:scaleX(0.8931);-webkit-text-stroke:0.2px #d8d9da">16:00</div>
<div class="t" style="left:427.13px;top:387.74px;font-size:10.00px;line-height:10.00px;font-weight:normal;font-style:normal;color:#d8d9da;transform:scaleX(0.8931);-webkit-text-stroke:0.2px #d8d9da">18:00</div>
<div class="t" style="left:506.54px;top:387.74px;font-size:10.00px;line-height:10.00px;font-weight:normal;font-style:normal;color:#d8d9da;transform:scaleX(0.9170);-webkit-text-stroke:0.2px #d8d9da">20:00</div>
<div class="t" style="left:586.54px;top:387.74px;font-size:10.00px;line-height:10.00px;font-weight:normal;font-style:normal;color:#d8d9da;transform:scaleX(0.9170);-webkit-text-stroke:0.2px #d8d9da">22:00</div>
<div class="t" style="left:666.63px;top:387.74px;font-size:10.00px;line-height:10.00px;font-weight:normal;font-style:normal;color:#d8d9da;transform:scaleX(0.9132);-webkit-text-stroke:0.2px #d8d9da">00:00</div>
<div class="t" style="left:746.63px;top:387.74px;font-size:10.00px;line-height:10.00px;font-weight:normal;font-style:normal;color:#d8d9da;transform:scaleX(0.9132);-webkit-text-stroke:0.2px #d8d9da">02:00</div>
<div class="t" style="left:826.63px;top:387.74px;font-size:10.00px;line-height:10.00px;font-weight:normal;font-style:normal;color:#d8d9da;transform:scaleX(0.9132);-webkit-text-stroke:0.2px #d8d9da">04:00</div>
<div class="t" style="left:906.63px;top:387.74px;font-size:10.00px;line-height:10.00px;font-weight:normal;font-style:normal;color:#d8d9da;transform:scaleX(0.9132);-webkit-text-stroke:0.2px #d8d9da">06:00</div>
<div class="t" style="left:986.63px;top:387.74px;font-size:10.00px;line-height:10.00px;font-weight:normal;font-style:normal;color:#d8d9da;transform:scaleX(0.9132);-webkit-text-stroke:0.2px #d8d9da">08:00</div>
<div class="b" style="left:34px;top:409px;width:9.5px;height:2.2px;background:#7eb26d;"></div>
<div class="t" style="left:46.25px;top:405.75px;font-size:9.28px;line-height:9.28px;font-weight:normal;font-style:normal;color:#d8d9da;transform:scaleX(1.0105);-webkit-text-stroke:0.2px #d8d9da">Average temperature</div>
<div class="b" style="left:1014.7px;top:418.7px;width:1.8px;height:1.8px;background:#444"></div>
<div class="b" style="left:1012.0px;top:418.7px;width:1.8px;height:1.8px;background:#444"></div>
<div class="b" style="left:1009.3px;top:418.7px;width:1.8px;height:1.8px;background:#444"></div>
<div class="b" style="left:1014.7px;top:416.1px;width:1.8px;height:1.8px;background:#444"></div>
<div class="b" style="left:1012.0px;top:416.1px;width:1.8px;height:1.8px;background:#444"></div>
<div class="b" style="left:1014.7px;top:413.5px;width:1.8px;height:1.8px;background:#444"></div>
<div class="b" style="left:8px;top:431px;width:1011px;height:200px;background:#1f1d1e;border:1px solid #272727"></div>
<div class="t" style="left:505.46px;top:436.59px;font-size:11.59px;line-height:11.59px;font-weight:bold;font-style:normal;color:#d8d9da;transform:scaleX(0.9775);">pH</div>
<svg width="1024" height="592" style="left:0;top:0"><rect x="38" y="457" width="961" height="1" fill="#3d3d3d"/><rect x="38" y="481" width="961" height="1" fill="#3d3d3d"/><rect x="38" y="505" width="961" height="1" fill="#3d3d3d"/><rect x="38" y="529" width="961" height="1" fill="#3d3d3d"/><rect x="38" y="553" width="961" height="1" fill="#3d3d3d"/><rect x="38" y="578" width="961" height="1" fill="#3d3d3d"/><rect x="118" y="457" width="1" height="122" fill="#3d3d3d"/><rect x="198" y="457" width="1" height="122" fill="#3d3d3d"/><rect x="278" y="457" width="1" height="122" fill="#3d3d3d"/><rect x="358" y="457" width="1" height="122" fill="#3d3d3d"/><rect x="438" y="457" width="1" height="122" fill="#3d3d3d"/><rect x="518" y="457" width="1" height="122" fill="#3d3d3d"/><rect x="598" y="457" width="1" height="122" fill="#3d3d3d"/><rect x="678" y="457" width="1" height="122" fill="#3d3d3d"/><rect x="758" y="457" width="1" height="122" fill="#3d3d3d"/><rect x="838" y="457" width="1" height="122" fill="#3d3d3d"/><rect x="918" y="457" width="1" height="122" fill="#3d3d3d"/><rect x="998" y="457" width="1" height="122" fill="#3d3d3d"/><path d="M38.0,578 L38.0,470.49 L39.0,470.39 L40.0,470.69 L41.0,470.34 L42.0,470.62 L43.0,470.52 L44.0,470.33 L45.0,470.60 L46.0,470.32 L47.0,470.56 L48.0,470.34 L49.0,470.35 L50.0,470.55 L51.0,470.80 L52.0,470.37 L53.0,470.43 L54.0,470.68 L55.0,470.87 L56.0,470.65 L57.0,470.54 L58.0,470.89 L59.0,470.33 L60.0,470.82 L61.0,470.48 L62.0,470.39 L63.0,470.38 L64.0,470.49 L65.0,470.80 L66.0,470.42 L67.0,470.66 L68.0,470.70 L69.0,470.54 L70.0,470.65 L71.0,470.36 L72.0,470.36 L73.0,470.45 L74.0,470.74 L75.0,470.59 L76.0,470.52 L77.0,470.69 L78.0,470.61 L79.0,470.52 L80.0,470.82 L81.0,470.76 L82.0,470.49 L83.0,470.69 L84.0,470.66 L85.0,470.88 L86.0,470.79 L87.0,470.53 L88.0,470.95 L89.0,470.43 L90.0,470.61 L91.0,470.82 L92.0,470.46 L93.0,470.66 L94.0,470.39 L95.0,470.77 L96.0,470.83 L97.0,470.72 L98.0,470.90 L99.0,470.57 L100.0,470.80 L101.0,470.74 L102.0,470.73 L103.0,470.66 L104.0,470.89 L105.0,470.96 L106.0,470.68 L107.0,470.79 L108.0,470.43 L109.0,470.82 L110.0,470.79 L111.0,471.00 L112.0,470.90 L113.0,470.58 L114.0,470.64 L115.0,470.81 L116.0,470.43 L117.0,470.69 L118.0,470.52 L119.0,470.49 L120.0,470.46 L121.0,470.89 L122.0,470.50 L123.0,470.58 L124.0,470.67 L125.0,470.96 L126.0,470.48 L127.0,470.71 L128.0,470.77 L129.0,470.97 L130.0,470.93 L131.0,470.96 L132.0,470.61 L133.0,470.70 L134.0,470.67 L135.0,470.98 L136.0,471.03 L137.0,470.55 L138.0,470.56 L139.0,470.60 L140.0,470.60 L141.0,470.76 L142.0,470.82 L143.0,470.63 L144.0,470.47 L145.0,470.72 L146.0,470.70 L147.0,470.82 L148.0,471.05 L149.0,470.90 L150.0,470.79 L151.0,470.86 L152.0,470.89 L153.0,470.52 L154.0,471.03 L155.0,470.96 L156.0,471.02 L157.0,470.98 L158.0,470.74 L159.0,470.74 L160.0,470.57 L161.0,470.89 L162.0,470.55 L163.0,470.55 L164.0,470.64 L165.0,470.61 L166.0,470.72 L167.0,470.55 L168.0,470.52 L169.0,470.61 L170.0,470.59 L171.0,470.74 L172.0,470.54 L173.0,471.06 L174.0,470.90 L175.0,470.62 L176.0,470.69 L177.0,470.75 L178.0,470.76 L179.0,470.62 L180.0,471.05 L181.0,471.14 L182.0,470.83 L183.0,470.84 L184.0,470.60 L185.0,470.62 L186.0,470.76 L187.0,470.72 L188.0,471.06 L189.0,470.66 L190.0,470.58 L191.0,471.14 L192.0,470.89 L193.0,470.66 L194.0,470.90 L195.0,470.59 L196.0,470.89 L197.0,471.17 L198.0,471.10 L199.0,471.00 L200.0,470.74 L201.0,470.81 L202.0,470.69 L203.0,471.05 L204.0,470.91 L205.0,471.06 L206.0,470.80 L207.0,470.73 L208.0,471.09 L209.0,471.20 L210.0,471.12 L211.0,471.09 L212.0,471.10 L213.0,471.06 L214.0,470.75 L215.0,470.93 L216.0,470.83 L217.0,470.64 L218.0,470.64 L219.0,470.79 L220.0,470.78 L221.0,471.04 L222.0,471.20 L223.0,470.90 L224.0,471.20 L225.0,471.23 L226.0,471.21 L227.0,470.86 L228.0,470.78 L229.0,470.78 L230.0,470.76 L231.0,470.77 L232.0,471.03 L233.0,471.19 L234.0,471.16 L235.0,470.94 L236.0,471.05 L237.0,471.14 L238.0,470.71 L239.0,471.06 L240.0,471.21 L241.0,471.14 L242.0,471.12 L243.0,470.96 L244.0,470.78 L245.0,471.15 L246.0,470.88 L247.0,471.16 L248.0,471.27 L249.0,470.92 L250.0,470.93 L251.0,471.26 L252.0,471.13 L253.0,470.80 L254.0,470.77 L255.0,470.79 L256.0,471.24 L257.0,471.19 L258.0,470.80 L259.0,471.21 L260.0,471.31 L261.0,471.12 L262.0,470.94 L263.0,471.06 L264.0,470.82 L265.0,470.75 L266.0,471.33 L267.0,471.14 L268.0,471.07 L269.0,471.32 L270.0,471.03 L271.0,471.29 L272.0,471.27 L273.0,470.91 L274.0,470.93 L275.0,470.96 L276.0,470.94 L277.0,471.15 L278.0,470.96 L279.0,471.06 L280.0,470.89 L281.0,471.36 L282.0,471.03 L283.0,471.10 L284.0,471.18 L285.0,471.38 L286.0,471.09 L287.0,471.39 L288.0,471.15 L289.0,471.17 L290.0,471.17 L291.0,470.87 L292.0,471.13 L293.0,470.98 L294.0,470.88 L295.0,471.36 L296.0,470.99 L297.0,471.17 L298.0,471.33 L299.0,471.23 L300.0,471.10 L301.0,471.22 L302.0,471.25 L303.0,471.39 L304.0,470.99 L305.0,471.26 L306.0,471.08 L307.0,471.10 L308.0,471.40 L309.0,471.25 L310.0,471.29 L311.0,471.41 L312.0,471.51 L313.0,471.23 L314.0,471.34 L315.0,471.28 L316.0,471.29 L317.0,471.40 L318.0,471.26 L319.0,471.31 L320.0,471.28 L321.0,471.57 L322.0,471.43 L322.0,578 Z M331.0,578 L331.0,471.57 L331.8,471.57 L331.8,578 Z M333.0,578 L333.0,471.62 L334.0,471.22 L335.0,471.40 L336.0,471.64 L337.0,471.58 L338.0,471.16 L339.0,471.16 L340.0,471.35 L341.0,471.14 L342.0,471.24 L343.0,471.15 L344.0,471.51 L345.0,471.58 L346.0,471.66 L346.0,578 Z M352.0,578 L352.0,471.24 L352.8,471.24 L352.8,578 Z M357.0,578 L357.0,471.60 L358.0,471.57 L359.0,471.26 L360.0,471.71 L361.0,471.77 L362.0,471.32 L363.0,471.77 L364.0,471.44 L365.0,471.50 L366.0,471.80 L367.0,471.71 L368.0,471.32 L369.0,471.48 L370.0,471.54 L371.0,471.44 L372.0,471.36 L373.0,471.43 L373.0,578 Z M376.0,578 L376.0,471.69 L376.8,471.69 L376.8,578 Z M379.0,578 L379.0,471.28 L380.0,471.61 L381.0,471.54 L382.0,471.30 L383.0,471.49 L384.0,471.67 L385.0,471.61 L386.0,471.34 L387.0,471.90 L388.0,471.79 L389.0,471.90 L390.0,471.38 L391.0,471.49 L392.0,471.35 L393.0,471.80 L393.0,578 Z M396.0,578 L396.0,471.51 L397.0,471.43 L398.0,471.61 L398.0,578 Z M401.0,578 L401.0,471.92 L402.0,471.87 L403.0,471.54 L404.0,471.48 L405.0,471.94 L406.0,471.74 L407.0,471.82 L408.0,471.46 L409.0,471.44 L410.0,471.83 L411.0,471.67 L412.0,471.47 L413.0,471.99 L414.0,471.81 L415.0,471.92 L416.0,471.49 L417.0,471.96 L418.0,471.49 L419.0,471.97 L420.0,471.73 L421.0,471.67 L422.0,471.80 L423.0,472.03 L424.0,471.64 L425.0,471.56 L425.0,578 Z M428.0,578 L428.0,471.81 L429.0,471.65 L429.0,578 Z M431.0,578 L431.0,471.58 L432.0,471.61 L432.0,578 Z M435.0,578 L435.0,471.56 L436.0,471.66 L437.0,471.73 L438.0,471.73 L439.0,472.00 L440.0,471.73 L441.0,471.86 L442.0,471.67 L443.0,471.78 L444.0,471.58 L445.0,471.73 L446.0,471.59 L447.0,472.03 L448.0,471.92 L449.0,471.71 L450.0,471.88 L451.0,472.17 L452.0,471.68 L453.0,472.11 L454.0,471.89 L455.0,471.93 L456.0,472.14 L457.0,471.88 L458.0,471.96 L459.0,472.07 L460.0,472.25 L461.0,471.88 L462.0,472.18 L463.0,472.11 L464.0,472.07 L465.0,471.94 L466.0,471.91 L467.0,471.74 L468.0,471.79 L469.0,471.77 L470.0,472.17 L470.0,578 Z M472.0,578 L472.0,471.90 L473.0,471.85 L474.0,471.81 L475.0,472.27 L476.0,472.29 L477.0,472.18 L478.0,471.95 L479.0,471.93 L480.0,471.97 L481.0,472.08 L482.0,471.90 L483.0,472.08 L484.0,471.98 L485.0,472.40 L486.0,472.42 L487.0,472.17 L488.0,471.99 L489.0,472.43 L490.0,472.04 L491.0,472.08 L492.0,471.87 L493.0,472.11 L494.0,472.17 L495.0,472.19 L496.0,472.02 L497.0,472.21 L498.0,471.91 L499.0,472.07 L500.0,471.98 L501.0,472.17 L502.0,471.96 L503.0,471.96 L504.0,472.13 L505.0,472.09 L506.0,472.31 L506.0,578 Z M509.0,578 L509.0,472.30 L510.0,472.44 L511.0,472.39 L512.0,472.43 L513.0,472.54 L514.0,472.25 L515.0,472.23 L516.0,472.63 L517.0,472.14 L518.0,472.50 L519.0,472.46 L520.0,472.11 L521.0,472.59 L522.0,472.64 L523.0,472.49 L524.0,472.56 L525.0,472.62 L526.0,472.23 L527.0,472.47 L528.0,472.46 L529.0,472.67 L530.0,472.66 L531.0,472.69 L532.0,472.55 L533.0,472.75 L534.0,472.63 L535.0,472.65 L536.0,472.38 L537.0,472.27 L538.0,472.34 L539.0,472.49 L540.0,472.35 L541.0,472.79 L542.0,472.64 L543.0,472.69 L544.0,472.70 L545.0,472.74 L546.0,472.64 L547.0,472.36 L548.0,472.84 L549.0,472.82 L550.0,472.69 L551.0,472.72 L552.0,472.80 L553.0,472.45 L554.0,472.87 L555.0,472.59 L556.0,472.49 L557.0,472.61 L558.0,472.90 L558.0,578 Z M562.0,578 L562.0,472.63 L562.8,472.63 L562.8,578 Z M565.0,578 L565.0,472.98 L566.0,473.13 L567.0,472.85 L568.0,472.80 L569.0,472.86 L570.0,473.00 L571.0,473.06 L572.0,472.98 L573.0,473.00 L574.0,472.67 L575.0,472.73 L576.0,472.80 L577.0,473.10 L578.0,472.85 L579.0,473.02 L580.0,472.69 L581.0,472.73 L581.0,578 Z M584.0,578 L584.0,472.89 L585.0,473.14 L586.0,473.16 L587.0,473.16 L588.0,472.94 L589.0,473.09 L590.0,473.07 L591.0,473.08 L592.0,472.88 L593.0,473.35 L594.0,472.95 L595.0,473.43 L596.0,473.41 L597.0,472.87 L598.0,473.14 L599.0,473.37 L600.0,473.47 L601.0,473.17 L602.0,473.07 L603.0,473.05 L604.0,473.50 L605.0,473.07 L606.0,473.30 L607.0,473.05 L608.0,473.28 L609.0,473.55 L610.0,473.07 L611.0,473.49 L612.0,473.32 L613.0,473.55 L614.0,473.45 L614.0,578 Z M616.0,578 L616.0,473.19 L617.0,473.60 L618.0,473.36 L619.0,473.10 L620.0,473.09 L621.0,473.40 L622.0,473.38 L622.0,578 Z M624.0,578 L624.0,473.31 L625.0,473.23 L626.0,473.36 L627.0,473.35 L628.0,473.68 L629.0,473.18 L630.0,473.64 L631.0,473.71 L632.0,473.28 L633.0,473.78 L634.0,473.66 L635.0,473.78 L636.0,473.43 L637.0,473.49 L638.0,473.51 L639.0,473.88 L640.0,473.65 L641.0,473.52 L642.0,473.57 L643.0,473.49 L644.0,473.36 L645.0,473.41 L646.0,473.86 L647.0,473.54 L648.0,473.94 L649.0,473.53 L650.0,473.55 L651.0,473.71 L652.0,473.53 L653.0,473.65 L654.0,474.01 L655.0,473.98 L656.0,473.94 L657.0,473.84 L658.0,474.02 L659.0,474.05 L660.0,473.83 L661.0,473.94 L662.0,473.55 L663.0,473.97 L664.0,473.81 L665.0,474.00 L666.0,473.94 L667.0,473.74 L667.0,578 Z M669.0,578 L669.0,473.62 L670.0,474.15 L671.0,473.68 L672.0,473.90 L673.0,473.83 L674.0,473.82 L675.0,474.09 L676.0,474.24 L677.0,473.82 L678.0,474.07 L679.0,473.87 L680.0,474.03 L681.0,473.94 L682.0,473.82 L683.0,473.83 L684.0,473.86 L685.0,474.29 L686.0,474.06 L687.0,473.90 L688.0,474.32 L689.0,474.39 L690.0,474.07 L691.0,473.89 L692.0,473.93 L693.0,473.88 L694.0,474.04 L695.0,473.90 L696.0,474.00 L696.0,578 Z M699.0,578 L699.0,474.04 L700.0,474.24 L701.0,474.44 L702.0,474.36 L703.0,474.16 L704.0,474.17 L705.0,474.24 L706.0,474.15 L707.0,474.13 L708.0,473.97 L709.0,474.11 L710.0,474.52 L711.0,474.02 L712.0,474.25 L713.0,474.34 L714.0,474.48 L715.0,474.10 L716.0,474.13 L717.0,474.12 L718.0,474.22 L718.0,578 Z M721.0,578 L721.0,474.26 L721.8,474.26 L721.8,578 Z M727.0,578 L727.0,474.59 L728.0,474.53 L729.0,474.55 L730.0,474.05 L731.0,474.06 L732.0,474.47 L733.0,474.58 L734.0,474.33 L735.0,474.41 L736.0,474.06 L737.0,474.30 L738.0,474.62 L739.0,474.57 L740.0,474.59 L741.0,474.66 L742.0,474.23 L743.0,474.16 L744.0,474.19 L745.0,474.41 L746.0,474.51 L747.0,474.67 L748.0,474.54 L749.0,474.50 L750.0,474.58 L751.0,474.40 L752.0,474.46 L753.0,474.16 L754.0,474.61 L755.0,474.28 L756.0,474.70 L757.0,474.54 L758.0,474.34 L759.0,474.24 L760.0,474.32 L761.0,474.55 L762.0,474.59 L763.0,474.25 L764.0,474.22 L765.0,474.50 L766.0,474.54 L767.0,474.43 L768.0,474.33 L769.0,474.57 L770.0,474.22 L771.0,474.40 L772.0,474.51 L773.0,474.81 L774.0,474.63 L775.0,474.78 L776.0,474.55 L777.0,474.41 L778.0,474.43 L779.0,474.86 L780.0,474.72 L781.0,474.49 L782.0,474.32 L783.0,474.62 L784.0,474.73 L785.0,474.58 L786.0,474.49 L787.0,474.75 L788.0,474.91 L789.0,474.50 L790.0,474.39 L791.0,474.58 L792.0,474.64 L793.0,474.80 L794.0,474.52 L795.0,474.89 L796.0,474.86 L796.0,578 Z M799.0,578 L799.0,474.75 L799.8,474.75 L799.8,578 Z M806.0,578 L806.0,474.62 L807.0,475.09 L808.0,474.70 L809.0,475.01 L810.0,474.67 L811.0,474.67 L812.0,475.00 L813.0,474.73 L814.0,475.13 L815.0,474.86 L816.0,474.69 L816.0,578 Z M824.0,578 L824.0,474.77 L824.8,474.77 L824.8,578 Z M826.0,578 L826.0,474.90 L827.0,475.06 L828.0,475.24 L829.0,474.76 L830.0,474.92 L831.0,474.82 L832.0,475.28 L833.0,474.79 L834.0,474.75 L835.0,474.76 L836.0,474.97 L837.0,475.28 L838.0,475.28 L839.0,475.19 L840.0,475.36 L841.0,475.33 L842.0,474.98 L843.0,474.90 L844.0,475.36 L845.0,475.25 L846.0,474.83 L847.0,475.22 L848.0,475.05 L849.0,475.06 L850.0,475.04 L851.0,474.95 L851.0,578 Z M854.0,578 L854.0,474.87 L855.0,475.05 L856.0,475.10 L857.0,475.47 L858.0,474.98 L859.0,475.49 L860.0,475.04 L861.0,475.14 L862.0,475.43 L863.0,475.44 L863.0,578 Z M865.0,578 L865.0,475.22 L866.0,475.00 L867.0,475.26 L868.0,475.20 L869.0,475.54 L870.0,475.11 L871.0,475.22 L872.0,475.55 L873.0,475.04 L874.0,475.27 L875.0,475.52 L876.0,475.50 L877.0,475.08 L878.0,475.08 L879.0,475.10 L880.0,475.63 L881.0,475.24 L882.0,475.54 L883.0,475.64 L884.0,475.31 L885.0,475.28 L886.0,475.70 L887.0,475.50 L888.0,475.29 L889.0,475.58 L890.0,475.34 L891.0,475.33 L892.0,475.17 L893.0,475.63 L894.0,475.73 L895.0,475.57 L896.0,475.77 L897.0,475.22 L898.0,475.36 L898.0,578 Z M913.0,578 L913.0,475.62 L914.0,475.91 L915.0,475.92 L916.0,475.59 L917.0,475.51 L918.0,475.63 L919.0,475.68 L920.0,475.94 L921.0,475.51 L922.0,475.88 L923.0,475.85 L924.0,475.91 L925.0,475.89 L926.0,475.80 L927.0,475.64 L928.0,475.64 L929.0,475.67 L930.0,475.93 L931.0,475.52 L932.0,475.60 L932.0,578 Z M934.0,578 L934.0,475.95 L934.8,475.95 L934.8,578 Z M940.0,578 L940.0,475.69 L941.0,475.59 L942.0,475.58 L943.0,475.90 L944.0,475.77 L945.0,476.17 L946.0,476.12 L947.0,476.19 L948.0,475.77 L949.0,475.66 L950.0,475.68 L951.0,475.93 L952.0,476.06 L953.0,475.91 L954.0,475.79 L955.0,475.91 L956.0,476.04 L957.0,476.08 L958.0,476.13 L959.0,476.20 L960.0,476.10 L961.0,475.79 L962.0,476.23 L963.0,475.92 L964.0,476.09 L965.0,475.99 L966.0,476.22 L966.0,578 Z M970.0,578 L970.0,475.95 L970.8,475.95 L970.8,578 Z M976.0,578 L976.0,476.06 L977.0,476.07 L978.0,476.03 L979.0,476.48 L980.0,476.31 L981.0,476.17 L982.0,476.23 L983.0,476.60 L984.0,476.32 L985.0,476.17 L986.0,476.53 L987.0,476.45 L988.0,476.66 L989.0,476.14 L990.0,476.38 L991.0,476.60 L992.0,476.63 L993.0,476.68 L993.0,578 Z M996.0,578 L996.0,476.20 L997.0,476.36 L998.0,476.27 L998.0,578 Z" fill="rgba(126,178,109,0.10)"/><path d="M38.0,578 L38.0,551.41 L39.0,551.88 L40.0,551.64 L41.0,551.84 L42.0,551.51 L43.0,551.80 L44.0,551.54 L45.0,551.42 L46.0,551.73 L47.0,551.83 L48.0,551.32 L49.0,551.61 L50.0,551.62 L51.0,551.37 L52.0,551.46 L53.0,551.32 L54.0,551.35 L55.0,551.38 L56.0,551.58 L57.0,551.60 L58.0,551.33 L59.0,551.21 L60.0,551.40 L61.0,551.60 L62.0,551.29 L63.0,551.36 L64.0,551.29 L65.0,551.63 L66.0,551.47 L67.0,551.17 L68.0,551.19 L69.0,551.36 L70.0,551.44 L71.0,551.48 L72.0,551.15 L73.0,551.18 L74.0,551.49 L75.0,551.31 L76.0,551.23 L77.0,551.23 L78.0,551.61 L79.0,551.22 L80.0,551.36 L81.0,551.22 L82.0,551.25 L83.0,551.51 L84.0,551.58 L85.0,551.19 L86.0,551.08 L87.0,551.39 L88.0,551.07 L89.0,550.94 L90.0,551.47 L91.0,551.17 L92.0,551.40 L93.0,551.15 L94.0,551.42 L95.0,551.16 L96.0,550.97 L97.0,550.87 L98.0,551.19 L99.0,551.23 L100.0,551.38 L101.0,550.88 L102.0,551.19 L103.0,551.03 L104.0,551.10 L105.0,550.88 L106.0,550.95 L107.0,551.09 L108.0,551.32 L109.0,550.82 L110.0,551.04 L111.0,551.22 L112.0,551.31 L113.0,550.84 L114.0,550.79 L115.0,551.27 L116.0,551.28 L117.0,550.97 L118.0,550.71 L119.0,551.22 L120.0,550.89 L121.0,551.19 L122.0,551.01 L123.0,551.12 L124.0,550.72 L125.0,551.08 L126.0,550.74 L127.0,550.84 L128.0,551.09 L129.0,551.07 L130.0,550.68 L131.0,550.69 L132.0,550.79 L133.0,550.85 L134.0,550.76 L135.0,550.60 L136.0,550.66 L137.0,550.94 L138.0,551.03 L139.0,550.51 L140.0,550.81 L141.0,550.92 L142.0,550.48 L143.0,550.95 L144.0,550.51 L145.0,550.79 L146.0,550.75 L147.0,550.79 L148.0,550.59 L149.0,550.65 L150.0,550.74 L151.0,550.63 L152.0,550.76 L153.0,550.63 L154.0,550.61 L155.0,550.35 L156.0,550.70 L157.0,550.62 L158.0,550.45 L159.0,550.76 L160.0,550.76 L161.0,550.56 L162.0,550.38 L163.0,550.55 L164.0,550.32 L165.0,550.33 L166.0,550.50 L167.0,550.29 L168.0,550.49 L169.0,550.52 L170.0,550.23 L171.0,550.58 L172.0,550.24 L173.0,550.62 L174.0,550.64 L175.0,550.47 L176.0,550.18 L177.0,550.44 L178.0,550.36 L179.0,550.69 L180.0,550.20 L181.0,550.62 L182.0,550.69 L183.0,550.53 L184.0,550.57 L185.0,550.19 L186.0,550.65 L187.0,550.35 L188.0,550.62 L189.0,550.58 L190.0,550.12 L191.0,550.49 L192.0,550.56 L193.0,550.04 L194.0,550.20 L195.0,550.43 L196.0,550.06 L197.0,550.50 L198.0,550.12 L199.0,550.43 L200.0,550.02 L201.0,550.23 L202.0,550.47 L203.0,550.03 L204.0,550.05 L205.0,550.19 L206.0,550.07 L207.0,549.89 L208.0,549.97 L209.0,549.95 L210.0,550.40 L211.0,550.24 L212.0,550.36 L213.0,549.92 L214.0,550.28 L215.0,549.87 L216.0,550.11 L217.0,550.16 L218.0,549.99 L219.0,550.29 L220.0,550.09 L221.0,550.09 L222.0,550.26 L223.0,549.79 L224.0,550.31 L225.0,550.09 L226.0,549.93 L227.0,550.17 L228.0,549.84 L229.0,550.27 L230.0,550.01 L231.0,549.87 L232.0,550.10 L233.0,549.90 L234.0,549.73 L235.0,550.06 L236.0,549.64 L237.0,550.09 L238.0,549.74 L239.0,549.96 L240.0,550.16 L241.0,549.91 L242.0,549.95 L243.0,549.73 L244.0,549.54 L245.0,549.55 L246.0,549.61 L247.0,549.88 L248.0,549.76 L249.0,549.80 L250.0,550.02 L251.0,549.55 L252.0,549.60 L253.0,549.85 L254.0,549.46 L255.0,549.44 L256.0,549.64 L257.0,549.48 L258.0,549.62 L259.0,549.53 L260.0,549.74 L261.0,549.73 L262.0,549.49 L263.0,549.74 L264.0,549.64 L265.0,549.43 L266.0,549.90 L267.0,549.47 L268.0,549.41 L269.0,549.37 L270.0,549.68 L271.0,549.82 L272.0,549.76 L273.0,549.52 L274.0,549.43 L275.0,549.27 L276.0,549.65 L277.0,549.59 L278.0,549.46 L279.0,549.63 L280.0,549.50 L281.0,549.79 L282.0,549.66 L283.0,549.36 L284.0,549.75 L285.0,549.23 L286.0,549.51 L287.0,549.43 L288.0,549.32 L289.0,549.21 L290.0,549.63 L291.0,549.17 L292.0,549.48 L293.0,549.71 L294.0,549.23 L295.0,549.25 L296.0,549.49 L297.0,549.42 L298.0,549.50 L299.0,549.59 L300.0,549.20 L301.0,549.28 L302.0,549.27 L303.0,549.11 L304.0,549.61 L305.0,549.54 L306.0,549.49 L307.0,549.06 L308.0,549.55 L309.0,549.49 L310.0,549.31 L311.0,549.47 L312.0,549.29 L313.0,549.15 L314.0,549.07 L315.0,549.14 L316.0,549.02 L317.0,549.19 L318.0,549.43 L319.0,549.39 L320.0,549.47 L321.0,549.39 L322.0,549.11 L322.0,578 Z M331.0,578 L331.0,549.23 L331.8,549.23 L331.8,578 Z M333.0,578 L333.0,549.14 L334.0,549.35 L335.0,549.18 L336.0,549.02 L337.0,549.24 L338.0,549.43 L339.0,548.97 L340.0,549.36 L341.0,548.84 L342.0,548.98 L343.0,548.95 L344.0,549.25 L345.0,549.37 L346.0,549.24 L346.0,578 Z M352.0,578 L352.0,548.95 L352.8,548.95 L352.8,578 Z M357.0,578 L357.0,549.25 L358.0,548.91 L359.0,548.85 L360.0,549.24 L361.0,549.07 L362.0,549.10 L363.0,549.08 L364.0,549.26 L365.0,548.95 L366.0,549.16 L367.0,549.07 L368.0,549.16 L369.0,548.90 L370.0,549.07 L371.0,548.97 L372.0,548.80 L373.0,548.74 L373.0,578 Z M376.0,578 L376.0,548.97 L376.8,548.97 L376.8,578 Z M379.0,578 L379.0,548.62 L380.0,549.11 L381.0,548.65 L382.0,548.57 L383.0,548.61 L384.0,549.10 L385.0,548.74 L386.0,548.61 L387.0,548.54 L388.0,548.54 L389.0,548.92 L390.0,548.88 L391.0,548.91 L392.0,548.93 L393.0,548.52 L393.0,578 Z M396.0,578 L396.0,548.81 L397.0,548.67 L398.0,548.94 L398.0,578 Z M401.0,578 L401.0,548.92 L402.0,548.95 L403.0,548.45 L404.0,548.93 L405.0,548.95 L406.0,548.96 L407.0,548.45 L408.0,548.50 L409.0,548.44 L410.0,548.39 L411.0,548.87 L412.0,548.84 L413.0,548.73 L414.0,548.84 L415.0,548.71 L416.0,548.50 L417.0,548.38 L418.0,548.37 L419.0,548.76 L420.0,548.42 L421.0,548.48 L422.0,548.54 L423.0,548.29 L424.0,548.43 L425.0,548.44 L425.0,578 Z M428.0,578 L428.0,548.68 L429.0,548.46 L429.0,578 Z M431.0,578 L431.0,548.42 L432.0,548.80 L432.0,578 Z M435.0,578 L435.0,548.50 L436.0,548.70 L437.0,548.56 L438.0,548.20 L439.0,548.42 L440.0,548.43 L441.0,548.62 L442.0,548.36 L443.0,548.57 L444.0,548.46 L445.0,548.26 L446.0,548.64 L447.0,548.17 L448.0,548.61 L449.0,548.21 L450.0,548.10 L451.0,548.23 L452.0,548.58 L453.0,548.72 L454.0,548.15 L455.0,548.45 L456.0,548.46 L457.0,548.65 L458.0,548.30 L459.0,548.49 L460.0,548.42 L461.0,548.72 L462.0,548.39 L463.0,548.81 L464.0,548.42 L465.0,548.39 L466.0,548.69 L467.0,548.58 L468.0,548.36 L469.0,548.69 L470.0,548.36 L470.0,578 Z M472.0,578 L472.0,548.81 L473.0,548.77 L474.0,548.83 L475.0,548.75 L476.0,548.59 L477.0,548.63 L478.0,548.64 L479.0,548.95 L480.0,548.47 L481.0,548.97 L482.0,548.46 L483.0,548.58 L484.0,548.62 L485.0,549.02 L486.0,548.79 L487.0,548.73 L488.0,549.04 L489.0,548.66 L490.0,548.81 L491.0,548.86 L492.0,549.00 L493.0,549.01 L494.0,548.96 L495.0,548.79 L496.0,548.79 L497.0,548.70 L498.0,549.12 L499.0,549.02 L500.0,549.08 L501.0,548.75 L502.0,548.92 L503.0,549.13 L504.0,549.03 L505.0,548.77 L506.0,548.98 L506.0,578 Z M509.0,578 L509.0,549.27 L510.0,548.89 L511.0,548.87 L512.0,548.95 L513.0,549.20 L514.0,549.30 L515.0,548.89 L516.0,548.90 L517.0,548.97 L518.0,549.03 L519.0,549.16 L520.0,548.95 L521.0,549.06 L522.0,548.99 L523.0,549.47 L524.0,549.33 L525.0,548.97 L526.0,549.50 L527.0,548.99 L528.0,549.17 L529.0,549.54 L530.0,549.44 L531.0,549.41 L532.0,549.24 L533.0,549.11 L534.0,549.39 L535.0,549.08 L536.0,549.15 L537.0,549.27 L538.0,549.07 L539.0,549.30 L540.0,549.54 L541.0,549.50 L542.0,549.39 L543.0,549.48 L544.0,549.39 L545.0,549.21 L546.0,549.50 L547.0,549.39 L548.0,549.60 L549.0,549.71 L550.0,549.43 L551.0,549.53 L552.0,549.65 L553.0,549.46 L554.0,549.36 L555.0,549.66 L556.0,549.77 L557.0,549.72 L558.0,549.68 L558.0,578 Z M562.0,578 L562.0,549.82 L562.8,549.82 L562.8,578 Z M565.0,578 L565.0,549.75 L566.0,549.73 L567.0,549.63 L568.0,549.56 L569.0,549.76 L570.0,549.45 L571.0,549.65 L572.0,549.88 L573.0,549.85 L574.0,549.81 L575.0,549.60 L576.0,549.71 L577.0,549.74 L578.0,549.85 L579.0,549.73 L580.0,549.91 L581.0,550.07 L581.0,578 Z M584.0,578 L584.0,549.67 L585.0,549.97 L586.0,550.06 L587.0,549.84 L588.0,549.91 L589.0,550.22 L590.0,549.67 L591.0,549.99 L592.0,549.78 L593.0,550.16 L594.0,550.27 L595.0,550.04 L596.0,549.80 L597.0,550.10 L598.0,550.09 L599.0,550.22 L600.0,550.11 L601.0,550.20 L602.0,550.33 L603.0,550.16 L604.0,550.11 L605.0,550.44 L606.0,550.02 L607.0,550.32 L608.0,550.16 L609.0,550.39 L610.0,550.02 L611.0,550.56 L612.0,550.19 L613.0,550.03 L614.0,550.17 L614.0,578 Z M616.0,578 L616.0,550.28 L617.0,550.06 L618.0,550.32 L619.0,550.34 L620.0,550.52 L621.0,550.33 L622.0,550.29 L622.0,578 Z M624.0,578 L624.0,550.29 L625.0,550.62 L626.0,550.75 L627.0,550.52 L628.0,550.35 L629.0,550.72 L630.0,550.49 L631.0,550.39 L632.0,550.36 L633.0,550.76 L634.0,550.80 L635.0,550.71 L636.0,550.62 L637.0,550.69 L638.0,550.51 L639.0,550.96 L640.0,550.61 L641.0,550.80 L642.0,550.92 L643.0,550.93 L644.0,550.74 L645.0,550.65 L646.0,550.82 L647.0,550.58 L648.0,551.02 L649.0,550.75 L650.0,551.06 L651.0,550.73 L652.0,550.81 L653.0,550.75 L654.0,550.87 L655.0,550.74 L656.0,550.64 L657.0,551.09 L658.0,550.84 L659.0,550.83 L660.0,550.88 L661.0,551.00 L662.0,550.99 L663.0,551.13 L664.0,551.16 L665.0,550.99 L666.0,551.35 L667.0,551.32 L667.0,578 Z M669.0,578 L669.0,550.87 L670.0,551.35 L671.0,551.41 L672.0,551.35 L673.0,550.98 L674.0,551.41 L675.0,551.30 L676.0,550.95 L677.0,550.96 L678.0,551.54 L679.0,551.38 L680.0,551.15 L681.0,551.08 L682.0,551.12 L683.0,551.19 L684.0,551.53 L685.0,551.28 L686.0,551.18 L687.0,551.65 L688.0,551.60 L689.0,551.24 L690.0,551.68 L691.0,551.53 L692.0,551.65 L693.0,551.60 L694.0,551.75 L695.0,551.70 L696.0,551.74 L696.0,578 Z M699.0,578 L699.0,551.40 L700.0,551.72 L701.0,551.63 L702.0,551.76 L703.0,551.59 L704.0,551.86 L705.0,551.67 L706.0,551.50 L707.0,551.49 L708.0,551.45 L709.0,551.67 L710.0,551.41 L711.0,551.66 L712.0,551.48 L713.0,551.69 L714.0,551.71 L715.0,551.74 L716.0,551.94 L717.0,551.43 L718.0,551.94 L718.0,578 Z M721.0,578 L721.0,551.74 L721.8,551.74 L721.8,578 Z M727.0,578 L727.0,551.85 L728.0,551.91 L729.0,552.03 L730.0,551.76 L731.0,551.79 L732.0,552.12 L733.0,551.60 L734.0,551.94 L735.0,551.95 L736.0,551.59 L737.0,551.95 L738.0,552.00 L739.0,552.16 L740.0,551.81 L741.0,552.20 L742.0,551.93 L743.0,551.92 L744.0,552.18 L745.0,551.67 L746.0,552.08 L747.0,552.04 L748.0,551.87 L749.0,552.19 L750.0,551.90 L751.0,551.98 L752.0,552.02 L753.0,552.17 L754.0,551.84 L755.0,551.98 L756.0,551.98 L757.0,552.07 L758.0,552.24 L759.0,551.93 L760.0,552.26 L761.0,552.01 L762.0,552.08 L763.0,551.95 L764.0,552.10 L765.0,552.38 L766.0,552.20 L767.0,552.29 L768.0,552.02 L769.0,552.02 L770.0,552.02 L771.0,552.20 L772.0,552.23 L773.0,552.33 L774.0,551.89 L775.0,552.31 L776.0,552.42 L777.0,552.22 L778.0,551.93 L779.0,552.09 L780.0,551.92 L781.0,552.04 L782.0,552.48 L783.0,552.30 L784.0,552.34 L785.0,552.43 L786.0,552.51 L787.0,552.34 L788.0,552.35 L789.0,552.36 L790.0,552.41 L791.0,552.36 L792.0,552.42 L793.0,552.14 L794.0,552.42 L795.0,552.31 L796.0,552.50 L796.0,578 Z M799.0,578 L799.0,552.12 L799.8,552.12 L799.8,578 Z M806.0,578 L806.0,552.22 L807.0,552.15 L808.0,552.60 L809.0,552.69 L810.0,552.54 L811.0,552.38 L812.0,552.66 L813.0,552.64 L814.0,552.51 L815.0,552.34 L816.0,552.37 L816.0,578 Z M824.0,578 L824.0,552.51 L824.8,552.51 L824.8,578 Z M826.0,578 L826.0,552.46 L827.0,552.54 L828.0,552.67 L829.0,552.85 L830.0,552.33 L831.0,552.65 L832.0,552.34 L833.0,552.39 L834.0,552.82 L835.0,552.68 L836.0,552.90 L837.0,552.62 L838.0,552.37 L839.0,552.60 L840.0,552.73 L841.0,552.95 L842.0,552.98 L843.0,552.69 L844.0,552.66 L845.0,552.48 L846.0,552.81 L847.0,552.56 L848.0,552.53 L849.0,552.46 L850.0,552.46 L851.0,552.87 L851.0,578 Z M854.0,578 L854.0,552.56 L855.0,553.07 L856.0,552.55 L857.0,553.03 L858.0,552.59 L859.0,552.53 L860.0,552.96 L861.0,552.68 L862.0,552.99 L863.0,552.67 L863.0,578 Z M865.0,578 L865.0,552.60 L866.0,553.04 L867.0,553.01 L868.0,553.11 L869.0,553.04 L870.0,552.66 L871.0,552.99 L872.0,553.05 L873.0,552.91 L874.0,553.20 L875.0,552.80 L876.0,553.23 L877.0,553.09 L878.0,552.68 L879.0,552.69 L880.0,553.08 L881.0,553.18 L882.0,552.75 L883.0,552.89 L884.0,553.15 L885.0,552.82 L886.0,553.25 L887.0,553.03 L888.0,552.78 L889.0,552.97 L890.0,553.11 L891.0,553.03 L892.0,553.18 L893.0,552.87 L894.0,553.27 L895.0,553.02 L896.0,553.19 L897.0,553.19 L898.0,553.07 L898.0,578 Z M913.0,578 L913.0,553.17 L914.0,553.42 L915.0,553.52 L916.0,553.43 L917.0,553.31 L918.0,553.15 L919.0,553.02 L920.0,553.58 L921.0,553.42 L922.0,553.50 L923.0,553.21 L924.0,553.39 L925.0,553.62 L926.0,553.54 L927.0,553.41 L928.0,553.24 L929.0,553.32 L930.0,553.60 L931.0,553.30 L932.0,553.50 L932.0,578 Z M934.0,578 L934.0,553.46 L934.8,553.46 L934.8,578 Z M940.0,578 L940.0,553.68 L941.0,553.64 L942.0,553.33 L943.0,553.17 L944.0,553.33 L945.0,553.44 L946.0,553.54 L947.0,553.69 L948.0,553.74 L949.0,553.24 L950.0,553.72 L951.0,553.72 L952.0,553.76 L953.0,553.59 L954.0,553.42 L955.0,553.77 L956.0,553.75 L957.0,553.69 L958.0,553.83 L959.0,553.50 L960.0,553.35 L961.0,553.64 L962.0,553.79 L963.0,553.44 L964.0,553.77 L965.0,553.89 L966.0,553.47 L966.0,578 Z M970.0,578 L970.0,553.72 L970.8,553.72 L970.8,578 Z M976.0,578 L976.0,553.79 L977.0,553.67 L978.0,553.52 L979.0,553.55 L980.0,553.86 L981.0,553.89 L982.0,553.69 L983.0,553.47 L984.0,553.91 L985.0,553.89 L986.0,553.58 L987.0,553.79 L988.0,553.99 L989.0,553.98 L990.0,553.77 L991.0,553.75 L992.0,553.82 L993.0,553.59 L993.0,578 Z M996.0,578 L996.0,553.60 L997.0,553.60 L998.0,553.92 L998.0,578 Z" fill="rgba(234,184,57,0.10)"/><path d="M38.0,470.49 L39.0,470.39 L40.0,470.69 L41.0,470.34 L42.0,470.62 L43.0,470.52 L44.0,470.33 L45.0,470.60 L46.0,470.32 L47.0,470.56 L48.0,470.34 L49.0,470.35 L50.0,470.55 L51.0,470.80 L52.0,470.37 L53.0,470.43 L54.0,470.68 L55.0,470.87 L56.0,470.65 L57.0,470.54 L58.0,470.89 L59.0,470.33 L60.0,470.82 L61.0,470.48 L62.0,470.39 L63.0,470.38 L64.0,470.49 L65.0,470.80 L66.0,470.42 L67.0,470.66 L68.0,470.70 L69.0,470.54 L70.0,470.65 L71.0,470.36 L72.0,470.36 L73.0,470.45 L74.0,470.74 L75.0,470.59 L76.0,470.52 L77.0,470.69 L78.0,470.61 L79.0,470.52 L80.0,470.82 L81.0,470.76 L82.0,470.49 L83.0,470.69 L84.0,470.66 L85.0,470.88 L86.0,470.79 L87.0,470.53 L88.0,470.95 L89.0,470.43 L90.0,470.61 L91.0,470.82 L92.0,470.46 L93.0,470.66 L94.0,470.39 L95.0,470.77 L96.0,470.83 L97.0,470.72 L98.0,470.90 L99.0,470.57 L100.0,470.80 L101.0,470.74 L102.0,470.73 L103.0,470.66 L104.0,470.89 L105.0,470.96 L106.0,470.68 L107.0,470.79 L108.0,470.43 L109.0,470.82 L110.0,470.79 L111.0,471.00 L112.0,470.90 L113.0,470.58 L114.0,470.64 L115.0,470.81 L116.0,470.43 L117.0,470.69 L118.0,470.52 L119.0,470.49 L120.0,470.46 L121.0,470.89 L122.0,470.50 L123.0,470.58 L124.0,470.67 L125.0,470.96 L126.0,470.48 L127.0,470.71 L128.0,470.77 L129.0,470.97 L130.0,470.93 L131.0,470.96 L132.0,470.61 L133.0,470.70 L134.0,470.67 L135.0,470.98 L136.0,471.03 L137.0,470.55 L138.0,470.56 L139.0,470.60 L140.0,470.60 L141.0,470.76 L142.0,470.82 L143.0,470.63 L144.0,470.47 L145.0,470.72 L146.0,470.70 L147.0,470.82 L148.0,471.05 L149.0,470.90 L150.0,470.79 L151.0,470.86 L152.0,470.89 L153.0,470.52 L154.0,471.03 L155.0,470.96 L156.0,471.02 L157.0,470.98 L158.0,470.74 L159.0,470.74 L160.0,470.57 L161.0,470.89 L162.0,470.55 L163.0,470.55 L164.0,470.64 L165.0,470.61 L166.0,470.72 L167.0,470.55 L168.0,470.52 L169.0,470.61 L170.0,470.59 L171.0,470.74 L172.0,470.54 L173.0,471.06 L174.0,470.90 L175.0,470.62 L176.0,470.69 L177.0,470.75 L178.0,470.76 L179.0,470.62 L180.0,471.05 L181.0,471.14 L182.0,470.83 L183.0,470.84 L184.0,470.60 L185.0,470.62 L186.0,470.76 L187.0,470.72 L188.0,471.06 L189.0,470.66 L190.0,470.58 L191.0,471.14 L192.0,470.89 L193.0,470.66 L194.0,470.90 L195.0,470.59 L196.0,470.89 L197.0,471.17 L198.0,471.10 L199.0,471.00 L200.0,470.74 L201.0,470.81 L202.0,470.69 L203.0,471.05 L204.0,470.91 L205.0,471.06 L206.0,470.80 L207.0,470.73 L208.0,471.09 L209.0,471.20 L210.0,471.12 L211.0,471.09 L212.0,471.10 L213.0,471.06 L214.0,470.75 L215.0,470.93 L216.0,470.83 L217.0,470.64 L218.0,470.64 L219.0,470.79 L220.0,470.78 L221.0,471.04 L222.0,471.20 L223.0,470.90 L224.0,471.20 L225.0,471.23 L226.0,471.21 L227.0,470.86 L228.0,470.78 L229.0,470.78 L230.0,470.76 L231.0,470.77 L232.0,471.03 L233.0,471.19 L234.0,471.16 L235.0,470.94 L236.0,471.05 L237.0,471.14 L238.0,470.71 L239.0,471.06 L240.0,471.21 L241.0,471.14 L242.0,471.12 L243.0,470.96 L244.0,470.78 L245.0,471.15 L246.0,470.88 L247.0,471.16 L248.0,471.27 L249.0,470.92 L250.0,470.93 L251.0,471.26 L252.0,471.13 L253.0,470.80 L254.0,470.77 L255.0,470.79 L256.0,471.24 L257.0,471.19 L258.0,470.80 L259.0,471.21 L260.0,471.31 L261.0,471.12 L262.0,470.94 L263.0,471.06 L264.0,470.82 L265.0,470.75 L266.0,471.33 L267.0,471.14 L268.0,471.07 L269.0,471.32 L270.0,471.03 L271.0,471.29 L272.0,471.27 L273.0,470.91 L274.0,470.93 L275.0,470.96 L276.0,470.94 L277.0,471.15 L278.0,470.96 L279.0,471.06 L280.0,470.89 L281.0,471.36 L282.0,471.03 L283.0,471.10 L284.0,471.18 L285.0,471.38 L286.0,471.09 L287.0,471.39 L288.0,471.15 L289.0,471.17 L290.0,471.17 L291.0,470.87 L292.0,471.13 L293.0,470.98 L294.0,470.88 L295.0,471.36 L296.0,470.99 L297.0,471.17 L298.0,471.33 L299.0,471.23 L300.0,471.10 L301.0,471.22 L302.0,471.25 L303.0,471.39 L304.0,470.99 L305.0,471.26 L306.0,471.08 L307.0,471.10 L308.0,471.40 L309.0,471.25 L310.0,471.29 L311.0,471.41 L312.0,471.51 L313.0,471.23 L314.0,471.34 L315.0,471.28 L316.0,471.29 L317.0,471.40 L318.0,471.26 L319.0,471.31 L320.0,471.28 L321.0,471.57 L322.0,471.43 M331.0,471.57 L331.8,471.57 M333.0,471.62 L334.0,471.22 L335.0,471.40 L336.0,471.64 L337.0,471.58 L338.0,471.16 L339.0,471.16 L340.0,471.35 L341.0,471.14 L342.0,471.24 L343.0,471.15 L344.0,471.51 L345.0,471.58 L346.0,471.66 M352.0,471.24 L352.8,471.24 M357.0,471.60 L358.0,471.57 L359.0,471.26 L360.0,471.71 L361.0,471.77 L362.0,471.32 L363.0,471.77 L364.0,471.44 L365.0,471.50 L366.0,471.80 L367.0,471.71 L368.0,471.32 L369.0,471.48 L370.0,471.54 L371.0,471.44 L372.0,471.36 L373.0,471.43 M376.0,471.69 L376.8,471.69 M379.0,471.28 L380.0,471.61 L381.0,471.54 L382.0,471.30 L383.0,471.49 L384.0,471.67 L385.0,471.61 L386.0,471.34 L387.0,471.90 L388.0,471.79 L389.0,471.90 L390.0,471.38 L391.0,471.49 L392.0,471.35 L393.0,471.80 M396.0,471.51 L397.0,471.43 L398.0,471.61 M401.0,471.92 L402.0,471.87 L403.0,471.54 L404.0,471.48 L405.0,471.94 L406.0,471.74 L407.0,471.82 L408.0,471.46 L409.0,471.44 L410.0,471.83 L411.0,471.67 L412.0,471.47 L413.0,471.99 L414.0,471.81 L415.0,471.92 L416.0,471.49 L417.0,471.96 L418.0,471.49 L419.0,471.97 L420.0,471.73 L421.0,471.67 L422.0,471.80 L423.0,472.03 L424.0,471.64 L425.0,471.56 M428.0,471.81 L429.0,471.65 M431.0,471.58 L432.0,471.61 M435.0,471.56 L436.0,471.66 L437.0,471.73 L438.0,471.73 L439.0,472.00 L440.0,471.73 L441.0,471.86 L442.0,471.67 L443.0,471.78 L444.0,471.58 L445.0,471.73 L446.0,471.59 L447.0,472.03 L448.0,471.92 L449.0,471.71 L450.0,471.88 L451.0,472.17 L452.0,471.68 L453.0,472.11 L454.0,471.89 L455.0,471.93 L456.0,472.14 L457.0,471.88 L458.0,471.96 L459.0,472.07 L460.0,472.25 L461.0,471.88 L462.0,472.18 L463.0,472.11 L464.0,472.07 L465.0,471.94 L466.0,471.91 L467.0,471.74 L468.0,471.79 L469.0,471.77 L470.0,472.17 M472.0,471.90 L473.0,471.85 L474.0,471.81 L475.0,472.27 L476.0,472.29 L477.0,472.18 L478.0,471.95 L479.0,471.93 L480.0,471.97 L481.0,472.08 L482.0,471.90 L483.0,472.08 L484.0,471.98 L485.0,472.40 L486.0,472.42 L487.0,472.17 L488.0,471.99 L489.0,472.43 L490.0,472.04 L491.0,472.08 L492.0,471.87 L493.0,472.11 L494.0,472.17 L495.0,472.19 L496.0,472.02 L497.0,472.21 L498.0,471.91 L499.0,472.07 L500.0,471.98 L501.0,472.17 L502.0,471.96 L503.0,471.96 L504.0,472.13 L505.0,472.09 L506.0,472.31 M509.0,472.30 L510.0,472.44 L511.0,472.39 L512.0,472.43 L513.0,472.54 L514.0,472.25 L515.0,472.23 L516.0,472.63 L517.0,472.14 L518.0,472.50 L519.0,472.46 L520.0,472.11 L521.0,472.59 L522.0,472.64 L523.0,472.49 L524.0,472.56 L525.0,472.62 L526.0,472.23 L527.0,472.47 L528.0,472.46 L529.0,472.67 L530.0,472.66 L531.0,472.69 L532.0,472.55 L533.0,472.75 L534.0,472.63 L535.0,472.65 L536.0,472.38 L537.0,472.27 L538.0,472.34 L539.0,472.49 L540.0,472.35 L541.0,472.79 L542.0,472.64 L543.0,472.69 L544.0,472.70 L545.0,472.74 L546.0,472.64 L547.0,472.36 L548.0,472.84 L549.0,472.82 L550.0,472.69 L551.0,472.72 L552.0,472.80 L553.0,472.45 L554.0,472.87 L555.0,472.59 L556.0,472.49 L557.0,472.61 L558.0,472.90 M562.0,472.63 L562.8,472.63 M565.0,472.98 L566.0,473.13 L567.0,472.85 L568.0,472.80 L569.0,472.86 L570.0,473.00 L571.0,473.06 L572.0,472.98 L573.0,473.00 L574.0,472.67 L575.0,472.73 L576.0,472.80 L577.0,473.10 L578.0,472.85 L579.0,473.02 L580.0,472.69 L581.0,472.73 M584.0,472.89 L585.0,473.14 L586.0,473.16 L587.0,473.16 L588.0,472.94 L589.0,473.09 L590.0,473.07 L591.0,473.08 L592.0,472.88 L593.0,473.35 L594.0,472.95 L595.0,473.43 L596.0,473.41 L597.0,472.87 L598.0,473.14 L599.0,473.37 L600.0,473.47 L601.0,473.17 L602.0,473.07 L603.0,473.05 L604.0,473.50 L605.0,473.07 L606.0,473.30 L607.0,473.05 L608.0,473.28 L609.0,473.55 L610.0,473.07 L611.0,473.49 L612.0,473.32 L613.0,473.55 L614.0,473.45 M616.0,473.19 L617.0,473.60 L618.0,473.36 L619.0,473.10 L620.0,473.09 L621.0,473.40 L622.0,473.38 M624.0,473.31 L625.0,473.23 L626.0,473.36 L627.0,473.35 L628.0,473.68 L629.0,473.18 L630.0,473.64 L631.0,473.71 L632.0,473.28 L633.0,473.78 L634.0,473.66 L635.0,473.78 L636.0,473.43 L637.0,473.49 L638.0,473.51 L639.0,473.88 L640.0,473.65 L641.0,473.52 L642.0,473.57 L643.0,473.49 L644.0,473.36 L645.0,473.41 L646.0,473.86 L647.0,473.54 L648.0,473.94 L649.0,473.53 L650.0,473.55 L651.0,473.71 L652.0,473.53 L653.0,473.65 L654.0,474.01 L655.0,473.98 L656.0,473.94 L657.0,473.84 L658.0,474.02 L659.0,474.05 L660.0,473.83 L661.0,473.94 L662.0,473.55 L663.0,473.97 L664.0,473.81 L665.0,474.00 L666.0,473.94 L667.0,473.74 M669.0,473.62 L670.0,474.15 L671.0,473.68 L672.0,473.90 L673.0,473.83 L674.0,473.82 L675.0,474.09 L676.0,474.24 L677.0,473.82 L678.0,474.07 L679.0,473.87 L680.0,474.03 L681.0,473.94 L682.0,473.82 L683.0,473.83 L684.0,473.86 L685.0,474.29 L686.0,474.06 L687.0,473.90 L688.0,474.32 L689.0,474.39 L690.0,474.07 L691.0,473.89 L692.0,473.93 L693.0,473.88 L694.0,474.04 L695.0,473.90 L696.0,474.00 M699.0,474.04 L700.0,474.24 L701.0,474.44 L702.0,474.36 L703.0,474.16 L704.0,474.17 L705.0,474.24 L706.0,474.15 L707.0,474.13 L708.0,473.97 L709.0,474.11 L710.0,474.52 L711.0,474.02 L712.0,474.25 L713.0,474.34 L714.0,474.48 L715.0,474.10 L716.0,474.13 L717.0,474.12 L718.0,474.22 M721.0,474.26 L721.8,474.26 M727.0,474.59 L728.0,474.53 L729.0,474.55 L730.0,474.05 L731.0,474.06 L732.0,474.47 L733.0,474.58 L734.0,474.33 L735.0,474.41 L736.0,474.06 L737.0,474.30 L738.0,474.62 L739.0,474.57 L740.0,474.59 L741.0,474.66 L742.0,474.23 L743.0,474.16 L744.0,474.19 L745.0,474.41 L746.0,474.51 L747.0,474.67 L748.0,474.54 L749.0,474.50 L750.0,474.58 L751.0,474.40 L752.0,474.46 L753.0,474.16 L754.0,474.61 L755.0,474.28 L756.0,474.70 L757.0,474.54 L758.0,474.34 L759.0,474.24 L760.0,474.32 L761.0,474.55 L762.0,474.59 L763.0,474.25 L764.0,474.22 L765.0,474.50 L766.0,474.54 L767.0,474.43 L768.0,474.33 L769.0,474.57 L770.0,474.22 L771.0,474.40 L772.0,474.51 L773.0,474.81 L774.0,474.63 L775.0,474.78 L776.0,474.55 L777.0,474.41 L778.0,474.43 L779.0,474.86 L780.0,474.72 L781.0,474.49 L782.0,474.32 L783.0,474.62 L784.0,474.73 L785.0,474.58 L786.0,474.49 L787.0,474.75 L788.0,474.91 L789.0,474.50 L790.0,474.39 L791.0,474.58 L792.0,474.64 L793.0,474.80 L794.0,474.52 L795.0,474.89 L796.0,474.86 M799.0,474.75 L799.8,474.75 M806.0,474.62 L807.0,475.09 L808.0,474.70 L809.0,475.01 L810.0,474.67 L811.0,474.67 L812.0,475.00 L813.0,474.73 L814.0,475.13 L815.0,474.86 L816.0,474.69 M824.0,474.77 L824.8,474.77 M826.0,474.90 L827.0,475.06 L828.0,475.24 L829.0,474.76 L830.0,474.92 L831.0,474.82 L832.0,475.28 L833.0,474.79 L834.0,474.75 L835.0,474.76 L836.0,474.97 L837.0,475.28 L838.0,475.28 L839.0,475.19 L840.0,475.36 L841.0,475.33 L842.0,474.98 L843.0,474.90 L844.0,475.36 L845.0,475.25 L846.0,474.83 L847.0,475.22 L848.0,475.05 L849.0,475.06 L850.0,475.04 L851.0,474.95 M854.0,474.87 L855.0,475.05 L856.0,475.10 L857.0,475.47 L858.0,474.98 L859.0,475.49 L860.0,475.04 L861.0,475.14 L862.0,475.43 L863.0,475.44 M865.0,475.22 L866.0,475.00 L867.0,475.26 L868.0,475.20 L869.0,475.54 L870.0,475.11 L871.0,475.22 L872.0,475.55 L873.0,475.04 L874.0,475.27 L875.0,475.52 L876.0,475.50 L877.0,475.08 L878.0,475.08 L879.0,475.10 L880.0,475.63 L881.0,475.24 L882.0,475.54 L883.0,475.64 L884.0,475.31 L885.0,475.28 L886.0,475.70 L887.0,475.50 L888.0,475.29 L889.0,475.58 L890.0,475.34 L891.0,475.33 L892.0,475.17 L893.0,475.63 L894.0,475.73 L895.0,475.57 L896.0,475.77 L897.0,475.22 L898.0,475.36 M913.0,475.62 L914.0,475.91 L915.0,475.92 L916.0,475.59 L917.0,475.51 L918.0,475.63 L919.0,475.68 L920.0,475.94 L921.0,475.51 L922.0,475.88 L923.0,475.85 L924.0,475.91 L925.0,475.89 L926.0,475.80 L927.0,475.64 L928.0,475.64 L929.0,475.67 L930.0,475.93 L931.0,475.52 L932.0,475.60 M934.0,475.95 L934.8,475.95 M940.0,475.69 L941.0,475.59 L942.0,475.58 L943.0,475.90 L944.0,475.77 L945.0,476.17 L946.0,476.12 L947.0,476.19 L948.0,475.77 L949.0,475.66 L950.0,475.68 L951.0,475.93 L952.0,476.06 L953.0,475.91 L954.0,475.79 L955.0,475.91 L956.0,476.04 L957.0,476.08 L958.0,476.13 L959.0,476.20 L960.0,476.10 L961.0,475.79 L962.0,476.23 L963.0,475.92 L964.0,476.09 L965.0,475.99 L966.0,476.22 M970.0,475.95 L970.8,475.95 M976.0,476.06 L977.0,476.07 L978.0,476.03 L979.0,476.48 L980.0,476.31 L981.0,476.17 L982.0,476.23 L983.0,476.60 L984.0,476.32 L985.0,476.17 L986.0,476.53 L987.0,476.45 L988.0,476.66 L989.0,476.14 L990.0,476.38 L991.0,476.60 L992.0,476.63 L993.0,476.68 M996.0,476.20 L997.0,476.36 L998.0,476.27" fill="none" stroke="#7eb26d" stroke-width="1.1"/><path d="M38.0,551.41 L39.0,551.88 L40.0,551.64 L41.0,551.84 L42.0,551.51 L43.0,551.80 L44.0,551.54 L45.0,551.42 L46.0,551.73 L47.0,551.83 L48.0,551.32 L49.0,551.61 L50.0,551.62 L51.0,551.37 L52.0,551.46 L53.0,551.32 L54.0,551.35 L55.0,551.38 L56.0,551.58 L57.0,551.60 L58.0,551.33 L59.0,551.21 L60.0,551.40 L61.0,551.60 L62.0,551.29 L63.0,551.36 L64.0,551.29 L65.0,551.63 L66.0,551.47 L67.0,551.17 L68.0,551.19 L69.0,551.36 L70.0,551.44 L71.0,551.48 L72.0,551.15 L73.0,551.18 L74.0,551.49 L75.0,551.31 L76.0,551.23 L77.0,551.23 L78.0,551.61 L79.0,551.22 L80.0,551.36 L81.0,551.22 L82.0,551.25 L83.0,551.51 L84.0,551.58 L85.0,551.19 L86.0,551.08 L87.0,551.39 L88.0,551.07 L89.0,550.94 L90.0,551.47 L91.0,551.17 L92.0,551.40 L93.0,551.15 L94.0,551.42 L95.0,551.16 L96.0,550.97 L97.0,550.87 L98.0,551.19 L99.0,551.23 L100.0,551.38 L101.0,550.88 L102.0,551.19 L103.0,551.03 L104.0,551.10 L105.0,550.88 L106.0,550.95 L107.0,551.09 L108.0,551.32 L109.0,550.82 L110.0,551.04 L111.0,551.22 L112.0,551.31 L113.0,550.84 L114.0,550.79 L115.0,551.27 L116.0,551.28 L117.0,550.97 L118.0,550.71 L119.0,551.22 L120.0,550.89 L121.0,551.19 L122.0,551.01 L123.0,551.12 L124.0,550.72 L125.0,551.08 L126.0,550.74 L127.0,550.84 L128.0,551.09 L129.0,551.07 L130.0,550.68 L131.0,550.69 L132.0,550.79 L133.0,550.85 L134.0,550.76 L135.0,550.60 L136.0,550.66 L137.0,550.94 L138.0,551.03 L139.0,550.51 L140.0,550.81 L141.0,550.92 L142.0,550.48 L143.0,550.95 L144.0,550.51 L145.0,550.79 L146.0,550.75 L147.0,550.79 L148.0,550.59 L149.0,550.65 L150.0,550.74 L151.0,550.63 L152.0,550.76 L153.0,550.63 L154.0,550.61 L155.0,550.35 L156.0,550.70 L157.0,550.62 L158.0,550.45 L159.0,550.76 L160.0,550.76 L161.0,550.56 L162.0,550.38 L163.0,550.55 L164.0,550.32 L165.0,550.33 L166.0,550.50 L167.0,550.29 L168.0,550.49 L169.0,550.52 L170.0,550.23 L171.0,550.58 L172.0,550.24 L173.0,550.62 L174.0,550.64 L175.0,550.47 L176.0,550.18 L177.0,550.44 L178.0,550.36 L179.0,550.69 L180.0,550.20 L181.0,550.62 L182.0,550.69 L183.0,550.53 L184.0,550.57 L185.0,550.19 L186.0,550.65 L187.0,550.35 L188.0,550.62 L189.0,550.58 L190.0,550.12 L191.0,550.49 L192.0,550.56 L193.0,550.04 L194.0,550.20 L195.0,550.43 L196.0,550.06 L197.0,550.50 L198.0,550.12 L199.0,550.43 L200.0,550.02 L201.0,550.23 L202.0,550.47 L203.0,550.03 L204.0,550.05 L205.0,550.19 L206.0,550.07 L207.0,549.89 L208.0,549.97 L209.0,549.95 L210.0,550.40 L211.0,550.24 L212.0,550.36 L213.0,549.92 L214.0,550.28 L215.0,549.87 L216.0,550.11 L217.0,550.16 L218.0,549.99 L219.0,550.29 L220.0,550.09 L221.0,550.09 L222.0,550.26 L223.0,549.79 L224.0,550.31 L225.0,550.09 L226.0,549.93 L227.0,550.17 L228.0,549.84 L229.0,550.27 L230.0,550.01 L231.0,549.87 L232.0,550.10 L233.0,549.90 L234.0,549.73 L235.0,550.06 L236.0,549.64 L237.0,550.09 L238.0,549.74 L239.0,549.96 L240.0,550.16 L241.0,549.91 L242.0,549.95 L243.0,549.73 L244.0,549.54 L245.0,549.55 L246.0,549.61 L247.0,549.88 L248.0,549.76 L249.0,549.80 L250.0,550.02 L251.0,549.55 L252.0,549.60 L253.0,549.85 L254.0,549.46 L255.0,549.44 L256.0,549.64 L257.0,549.48 L258.0,549.62 L259.0,549.53 L260.0,549.74 L261.0,549.73 L262.0,549.49 L263.0,549.74 L264.0,549.64 L265.0,549.43 L266.0,549.90 L267.0,549.47 L268.0,549.41 L269.0,549.37 L270.0,549.68 L271.0,549.82 L272.0,549.76 L273.0,549.52 L274.0,549.43 L275.0,549.27 L276.0,549.65 L277.0,549.59 L278.0,549.46 L279.0,549.63 L280.0,549.50 L281.0,549.79 L282.0,549.66 L283.0,549.36 L284.0,549.75 L285.0,549.23 L286.0,549.51 L287.0,549.43 L288.0,549.32 L289.0,549.21 L290.0,549.63 L291.0,549.17 L292.0,549.48 L293.0,549.71 L294.0,549.23 L295.0,549.25 L296.0,549.49 L297.0,549.42 L298.0,549.50 L299.0,549.59 L300.0,549.20 L301.0,549.28 L302.0,549.27 L303.0,549.11 L304.0,549.61 L305.0,549.54 L306.0,549.49 L307.0,549.06 L308.0,549.55 L309.0,549.49 L310.0,549.31 L311.0,549.47 L312.0,549.29 L313.0,549.15 L314.0,549.07 L315.0,549.14 L316.0,549.02 L317.0,549.19 L318.0,549.43 L319.0,549.39 L320.0,549.47 L321.0,549.39 L322.0,549.11 M331.0,549.23 L331.8,549.23 M333.0,549.14 L334.0,549.35 L335.0,549.18 L336.0,549.02 L337.0,549.24 L338.0,549.43 L339.0,548.97 L340.0,549.36 L341.0,548.84 L342.0,548.98 L343.0,548.95 L344.0,549.25 L345.0,549.37 L346.0,549.24 M352.0,548.95 L352.8,548.95 M357.0,549.25 L358.0,548.91 L359.0,548.85 L360.0,549.24 L361.0,549.07 L362.0,549.10 L363.0,549.08 L364.0,549.26 L365.0,548.95 L366.0,549.16 L367.0,549.07 L368.0,549.16 L369.0,548.90 L370.0,549.07 L371.0,548.97 L372.0,548.80 L373.0,548.74 M376.0,548.97 L376.8,548.97 M379.0,548.62 L380.0,549.11 L381.0,548.65 L382.0,548.57 L383.0,548.61 L384.0,549.10 L385.0,548.74 L386.0,548.61 L387.0,548.54 L388.0,548.54 L389.0,548.92 L390.0,548.88 L391.0,548.91 L392.0,548.93 L393.0,548.52 M396.0,548.81 L397.0,548.67 L398.0,548.94 M401.0,548.92 L402.0,548.95 L403.0,548.45 L404.0,548.93 L405.0,548.95 L406.0,548.96 L407.0,548.45 L408.0,548.50 L409.0,548.44 L410.0,548.39 L411.0,548.87 L412.0,548.84 L413.0,548.73 L414.0,548.84 L415.0,548.71 L416.0,548.50 L417.0,548.38 L418.0,548.37 L419.0,548.76 L420.0,548.42 L421.0,548.48 L422.0,548.54 L423.0,548.29 L424.0,548.43 L425.0,548.44 M428.0,548.68 L429.0,548.46 M431.0,548.42 L432.0,548.80 M435.0,548.50 L436.0,548.70 L437.0,548.56 L438.0,548.20 L439.0,548.42 L440.0,548.43 L441.0,548.62 L442.0,548.36 L443.0,548.57 L444.0,548.46 L445.0,548.26 L446.0,548.64 L447.0,548.17 L448.0,548.61 L449.0,548.21 L450.0,548.10 L451.0,548.23 L452.0,548.58 L453.0,548.72 L454.0,548.15 L455.0,548.45 L456.0,548.46 L457.0,548.65 L458.0,548.30 L459.0,548.49 L460.0,548.42 L461.0,548.72 L462.0,548.39 L463.0,548.81 L464.0,548.42 L465.0,548.39 L466.0,548.69 L467.0,548.58 L468.0,548.36 L469.0,548.69 L470.0,548.36 M472.0,548.81 L473.0,548.77 L474.0,548.83 L475.0,548.75 L476.0,548.59 L477.0,548.63 L478.0,548.64 L479.0,548.95 L480.0,548.47 L481.0,548.97 L482.0,548.46 L483.0,548.58 L484.0,548.62 L485.0,549.02 L486.0,548.79 L487.0,548.73 L488.0,549.04 L489.0,548.66 L490.0,548.81 L491.0,548.86 L492.0,549.00 L493.0,549.01 L494.0,548.96 L495.0,548.79 L496.0,548.79 L497.0,548.70 L498.0,549.12 L499.0,549.02 L500.0,549.08 L501.0,548.75 L502.0,548.92 L503.0,549.13 L504.0,549.03 L505.0,548.77 L506.0,548.98 M509.0,549.27 L510.0,548.89 L511.0,548.87 L512.0,548.95 L513.0,549.20 L514.0,549.30 L515.0,548.89 L516.0,548.90 L517.0,548.97 L518.0,549.03 L519.0,549.16 L520.0,548.95 L521.0,549.06 L522.0,548.99 L523.0,549.47 L524.0,549.33 L525.0,548.97 L526.0,549.50 L527.0,548.99 L528.0,549.17 L529.0,549.54 L530.0,549.44 L531.0,549.41 L532.0,549.24 L533.0,549.11 L534.0,549.39 L535.0,549.08 L536.0,549.15 L537.0,549.27 L538.0,549.07 L539.0,549.30 L540.0,549.54 L541.0,549.50 L542.0,549.39 L543.0,549.48 L544.0,549.39 L545.0,549.21 L546.0,549.50 L547.0,549.39 L548.0,549.60 L549.0,549.71 L550.0,549.43 L551.0,549.53 L552.0,549.65 L553.0,549.46 L554.0,549.36 L555.0,549.66 L556.0,549.77 L557.0,549.72 L558.0,549.68 M562.0,549.82 L562.8,549.82 M565.0,549.75 L566.0,549.73 L567.0,549.63 L568.0,549.56 L569.0,549.76 L570.0,549.45 L571.0,549.65 L572.0,549.88 L573.0,549.85 L574.0,549.81 L575.0,549.60 L576.0,549.71 L577.0,549.74 L578.0,549.85 L579.0,549.73 L580.0,549.91 L581.0,550.07 M584.0,549.67 L585.0,549.97 L586.0,550.06 L587.0,549.84 L588.0,549.91 L589.0,550.22 L590.0,549.67 L591.0,549.99 L592.0,549.78 L593.0,550.16 L594.0,550.27 L595.0,550.04 L596.0,549.80 L597.0,550.10 L598.0,550.09 L599.0,550.22 L600.0,550.11 L601.0,550.20 L602.0,550.33 L603.0,550.16 L604.0,550.11 L605.0,550.44 L606.0,550.02 L607.0,550.32 L608.0,550.16 L609.0,550.39 L610.0,550.02 L611.0,550.56 L612.0,550.19 L613.0,550.03 L614.0,550.17 M616.0,550.28 L617.0,550.06 L618.0,550.32 L619.0,550.34 L620.0,550.52 L621.0,550.33 L622.0,550.29 M624.0,550.29 L625.0,550.62 L626.0,550.75 L627.0,550.52 L628.0,550.35 L629.0,550.72 L630.0,550.49 L631.0,550.39 L632.0,550.36 L633.0,550.76 L634.0,550.80 L635.0,550.71 L636.0,550.62 L637.0,550.69 L638.0,550.51 L639.0,550.96 L640.0,550.61 L641.0,550.80 L642.0,550.92 L643.0,550.93 L644.0,550.74 L645.0,550.65 L646.0,550.82 L647.0,550.58 L648.0,551.02 L649.0,550.75 L650.0,551.06 L651.0,550.73 L652.0,550.81 L653.0,550.75 L654.0,550.87 L655.0,550.74 L656.0,550.64 L657.0,551.09 L658.0,550.84 L659.0,550.83 L660.0,550.88 L661.0,551.00 L662.0,550.99 L663.0,551.13 L664.0,551.16 L665.0,550.99 L666.0,551.35 L667.0,551.32 M669.0,550.87 L670.0,551.35 L671.0,551.41 L672.0,551.35 L673.0,550.98 L674.0,551.41 L675.0,551.30 L676.0,550.95 L677.0,550.96 L678.0,551.54 L679.0,551.38 L680.0,551.15 L681.0,551.08 L682.0,551.12 L683.0,551.19 L684.0,551.53 L685.0,551.28 L686.0,551.18 L687.0,551.65 L688.0,551.60 L689.0,551.24 L690.0,551.68 L691.0,551.53 L692.0,551.65 L693.0,551.60 L694.0,551.75 L695.0,551.70 L696.0,551.74 M699.0,551.40 L700.0,551.72 L701.0,551.63 L702.0,551.76 L703.0,551.59 L704.0,551.86 L705.0,551.67 L706.0,551.50 L707.0,551.49 L708.0,551.45 L709.0,551.67 L710.0,551.41 L711.0,551.66 L712.0,551.48 L713.0,551.69 L714.0,551.71 L715.0,551.74 L716.0,551.94 L717.0,551.43 L718.0,551.94 M721.0,551.74 L721.8,551.74 M727.0,551.85 L728.0,551.91 L729.0,552.03 L730.0,551.76 L731.0,551.79 L732.0,552.12 L733.0,551.60 L734.0,551.94 L735.0,551.95 L736.0,551.59 L737.0,551.95 L738.0,552.00 L739.0,552.16 L740.0,551.81 L741.0,552.20 L742.0,551.93 L743.0,551.92 L744.0,552.18 L745.0,551.67 L746.0,552.08 L747.0,552.04 L748.0,551.87 L749.0,552.19 L750.0,551.90 L751.0,551.98 L752.0,552.02 L753.0,552.17 L754.0,551.84 L755.0,551.98 L756.0,551.98 L757.0,552.07 L758.0,552.24 L759.0,551.93 L760.0,552.26 L761.0,552.01 L762.0,552.08 L763.0,551.95 L764.0,552.10 L765.0,552.38 L766.0,552.20 L767.0,552.29 L768.0,552.02 L769.0,552.02 L770.0,552.02 L771.0,552.20 L772.0,552.23 L773.0,552.33 L774.0,551.89 L775.0,552.31 L776.0,552.42 L777.0,552.22 L778.0,551.93 L779.0,552.09 L780.0,551.92 L781.0,552.04 L782.0,552.48 L783.0,552.30 L784.0,552.34 L785.0,552.43 L786.0,552.51 L787.0,552.34 L788.0,552.35 L789.0,552.36 L790.0,552.41 L791.0,552.36 L792.0,552.42 L793.0,552.14 L794.0,552.42 L795.0,552.31 L796.0,552.50 M799.0,552.12 L799.8,552.12 M806.0,552.22 L807.0,552.15 L808.0,552.60 L809.0,552.69 L810.0,552.54 L811.0,552.38 L812.0,552.66 L813.0,552.64 L814.0,552.51 L815.0,552.34 L816.0,552.37 M824.0,552.51 L824.8,552.51 M826.0,552.46 L827.0,552.54 L828.0,552.67 L829.0,552.85 L830.0,552.33 L831.0,552.65 L832.0,552.34 L833.0,552.39 L834.0,552.82 L835.0,552.68 L836.0,552.90 L837.0,552.62 L838.0,552.37 L839.0,552.60 L840.0,552.73 L841.0,552.95 L842.0,552.98 L843.0,552.69 L844.0,552.66 L845.0,552.48 L846.0,552.81 L847.0,552.56 L848.0,552.53 L849.0,552.46 L850.0,552.46 L851.0,552.87 M854.0,552.56 L855.0,553.07 L856.0,552.55 L857.0,553.03 L858.0,552.59 L859.0,552.53 L860.0,552.96 L861.0,552.68 L862.0,552.99 L863.0,552.67 M865.0,552.60 L866.0,553.04 L867.0,553.01 L868.0,553.11 L869.0,553.04 L870.0,552.66 L871.0,552.99 L872.0,553.05 L873.0,552.91 L874.0,553.20 L875.0,552.80 L876.0,553.23 L877.0,553.09 L878.0,552.68 L879.0,552.69 L880.0,553.08 L881.0,553.18 L882.0,552.75 L883.0,552.89 L884.0,553.15 L885.0,552.82 L886.0,553.25 L887.0,553.03 L888.0,552.78 L889.0,552.97 L890.0,553.11 L891.0,553.03 L892.0,553.18 L893.0,552.87 L894.0,553.27 L895.0,553.02 L896.0,553.19 L897.0,553.19 L898.0,553.07 M913.0,553.17 L914.0,553.42 L915.0,553.52 L916.0,553.43 L917.0,553.31 L918.0,553.15 L919.0,553.02 L920.0,553.58 L921.0,553.42 L922.0,553.50 L923.0,553.21 L924.0,553.39 L925.0,553.62 L926.0,553.54 L927.0,553.41 L928.0,553.24 L929.0,553.32 L930.0,553.60 L931.0,553.30 L932.0,553.50 M934.0,553.46 L934.8,553.46 M940.0,553.68 L941.0,553.64 L942.0,553.33 L943.0,553.17 L944.0,553.33 L945.0,553.44 L946.0,553.54 L947.0,553.69 L948.0,553.74 L949.0,553.24 L950.0,553.72 L951.0,553.72 L952.0,553.76 L953.0,553.59 L954.0,553.42 L955.0,553.77 L956.0,553.75 L957.0,553.69 L958.0,553.83 L959.0,553.50 L960.0,553.35 L961.0,553.64 L962.0,553.79 L963.0,553.44 L964.0,553.77 L965.0,553.89 L966.0,553.47 M970.0,553.72 L970.8,553.72 M976.0,553.79 L977.0,553.67 L978.0,553.52 L979.0,553.55 L980.0,553.86 L981.0,553.89 L982.0,553.69 L983.0,553.47 L984.0,553.91 L985.0,553.89 L986.0,553.58 L987.0,553.79 L988.0,553.99 L989.0,553.98 L990.0,553.77 L991.0,553.75 L992.0,553.82 L993.0,553.59 M996.0,553.60 L997.0,553.60 L998.0,553.92" fill="none" stroke="#eab839" stroke-width="1.1"/></svg>
<div class="t" style="left:15.22px;top:452.65px;font-size:9.86px;line-height:9.86px;font-weight:normal;font-style:normal;color:#d8d9da;transform:scaleX(1.0000);-webkit-text-stroke:0.2px #d8d9da">12.0</div>
<div class="t" style="left:15.96px;top:476.65px;font-size:9.86px;line-height:9.86px;font-weight:normal;font-style:normal;color:#d8d9da;transform:scaleX(1.0000);-webkit-text-stroke:0.2px #d8d9da">11.0</div>
<div class="t" style="left:15.22px;top:500.65px;font-size:9.86px;line-height:9.86px;font-weight:normal;font-style:normal;color:#d8d9da;transform:scaleX(1.0000);-webkit-text-stroke:0.2px #d8d9da">10.0</div>
<div class="t" style="left:20.69px;top:524.65px;font-size:9.86px;line-height:9.86px;font-weight:normal;font-style:normal;color:#d8d9da;transform:scaleX(0.9587);-webkit-text-stroke:0.2px #d8d9da">9.0</div>
<div class="t" style="left:20.69px;top:548.65px;font-size:9.86px;line-height:9.86px;font-weight:normal;font-style:normal;color:#d8d9da;transform:scaleX(0.9587);-webkit-text-stroke:0.2px #d8d9da">8.0</div>
<div class="t" style="left:107.13px;top:583.74px;font-size:10.00px;line-height:10.00px;font-weight:normal;font-style:normal;color:#d8d9da;transform:scaleX(0.8931);-webkit-text-stroke:0.2px #d8d9da">10:00</div>
<div class="t" style="left:187.13px;top:583.74px;font-size:10.00px;line-height:10.00px;font-weight:normal;font-style:normal;color:#d8d9da;transform:scaleX(0.8931);-webkit-text-stroke:0.2px #d8d9da">12:00</div>
<div class="t" style="left:267.13px;top:583.74px;font-size:10.00px;line-height:10.00px;font-weight:normal;font-style:normal;color:#d8d9da;transform:scaleX(0.8931);-webkit-text-stroke:0.2px #d8d9da">14:00</div>
<div class="t" style="left:347.13px;top:583.74px;font-size:10.00px;line-height:10.00px;font-weight:normal;font-style:normal;color:#d8d9da;transform:scaleX(0.8931);-webkit-text-stroke:0.2px #d8d9da">16:00</div>
<div class="t" style="left:427.13px;top:583.74px;font-size:10.00px;line-height:10.00px;font-weight:normal;font-style:normal;color:#d8d9da;transform:scaleX(0.8931);-webkit-text-stroke:0.2px #d8d9da">18:00</div>
<div class="t" style="left:506.54px;top:583.74px;font-size:10.00px;line-height:10.00px;font-weight:normal;font-style:normal;color:#d8d9da;transform:scaleX(0.9170);-webkit-text-stroke:0.2px #d8d9da">20:00</div>
<div class="t" style="left:586.54px;top:583.74px;font-size:10.00px;line-height:10.00px;font-weight:normal;font-style:normal;color:#d8d9da;transform:scaleX(0.9170);-webkit-text-stroke:0.2px #d8d9da">22:00</div>
<div class="t" style="left:666.63px;top:583.74px;font-size:10.00px;line-height:10.00px;font-weight:normal;font-style:normal;color:#d8d9da;transform:scaleX(0.9132);-webkit-text-stroke:0.2px #d8d9da">00:00</div>
<div class="t" style="left:746.63px;top:583.74px;font-size:10.00px;line-height:10.00px;font-weight:normal;font-style:normal;color:#d8d9da;transform:scaleX(0.9132);-webkit-text-stroke:0.2px #d8d9da">02:00</div>
<div class="t" style="left:826.63px;top:583.74px;font-size:10.00px;line-height:10.00px;font-weight:normal;font-style:normal;color:#d8d9da;transform:scaleX(0.9132);-webkit-text-stroke:0.2px #d8d9da">04:00</div>
<div class="t" style="left:906.63px;top:583.74px;font-size:10.00px;line-height:10.00px;font-weight:normal;font-style:normal;color:#d8d9da;transform:scaleX(0.9132);-webkit-text-stroke:0.2px #d8d9da">06:00</div>
<div class="t" style="left:986.63px;top:583.74px;font-size:10.00px;line-height:10.00px;font-weight:normal;font-style:normal;color:#d8d9da;transform:scaleX(0.9132);-webkit-text-stroke:0.2px #d8d9da">08:00</div>
<div class="b" style="left:0px;top:591px;width:1024px;height:1px;background:#3a3626;"></div>
<div class="b" style="left:10px;top:574px;width:65px;height:17px;background:#f0f0f0;"></div>
<div class="t" style="left:14.60px;top:577.53px;font-size:10.00px;line-height:10.00px;font-weight:normal;font-style:normal;color:#2e2e2e;transform:scaleX(0.8925);">66.128.58.115</div>
</body></html>
